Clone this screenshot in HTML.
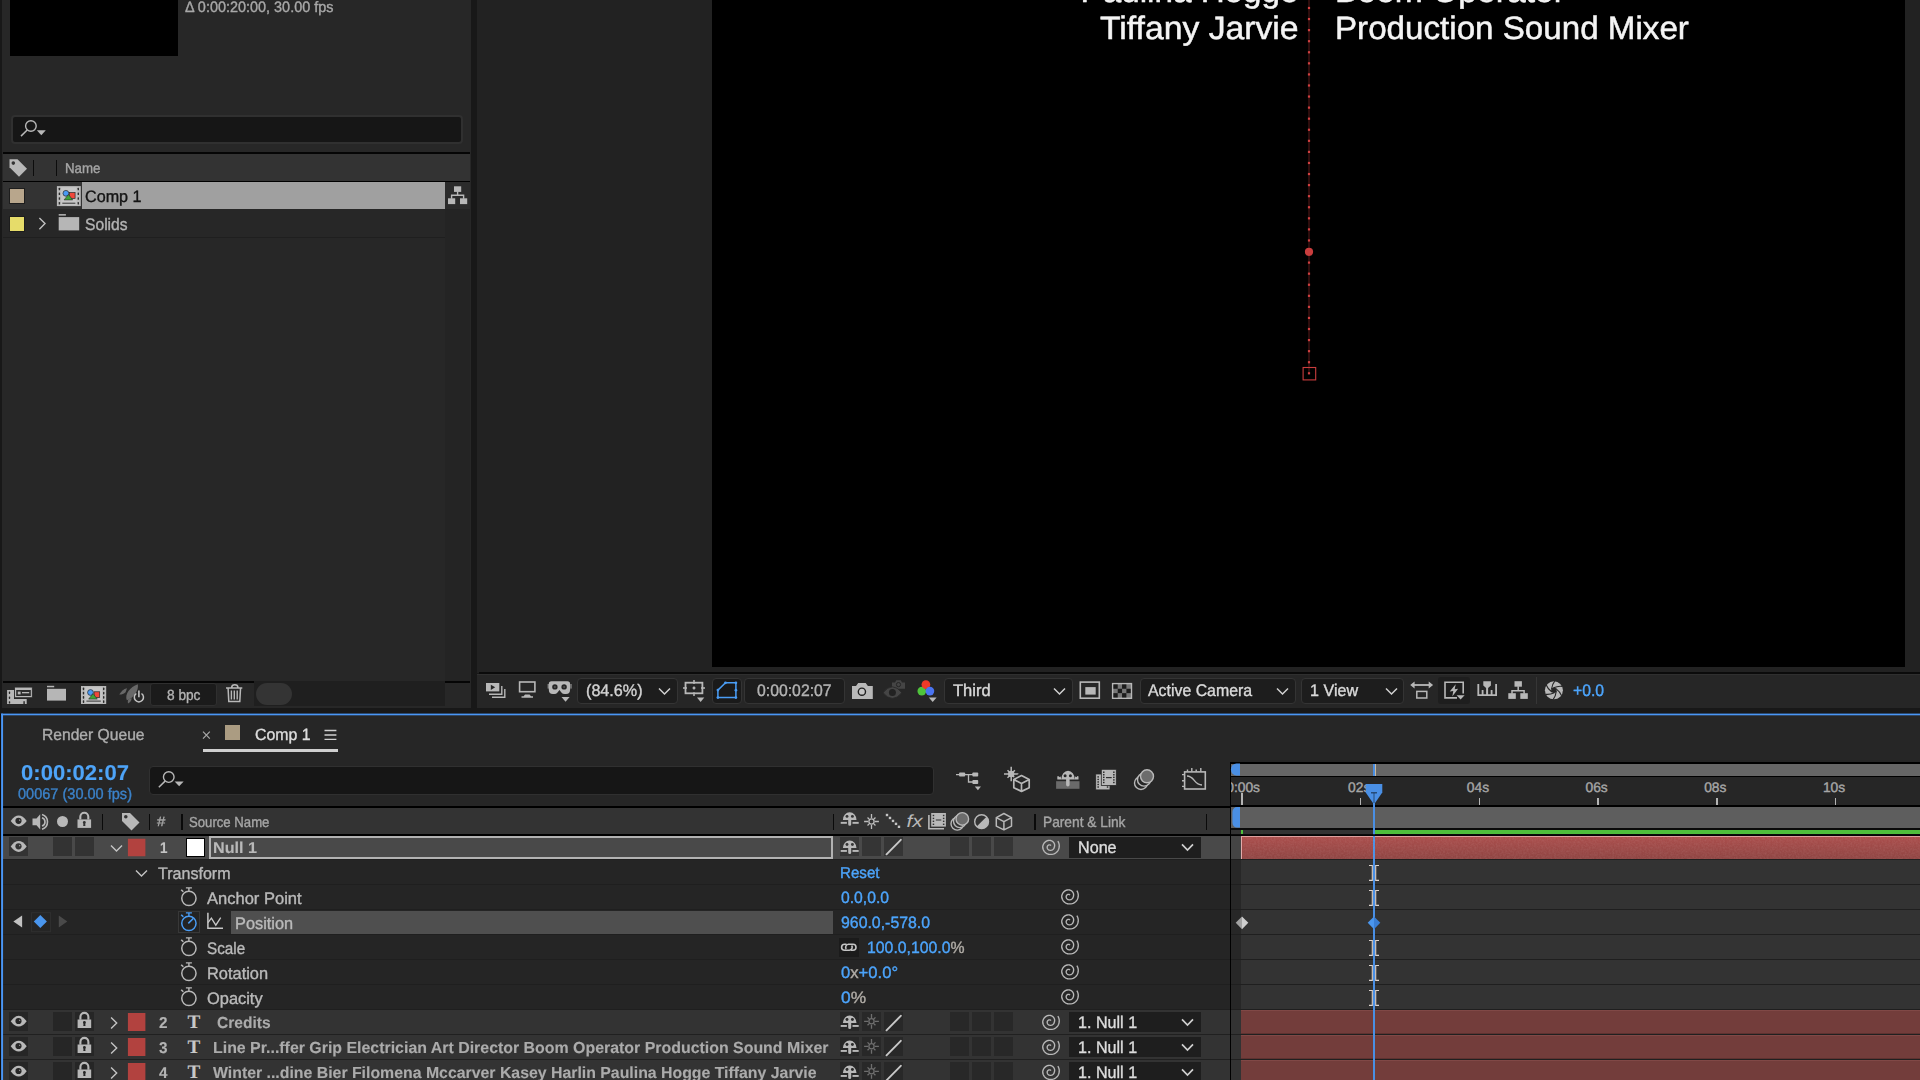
<!DOCTYPE html>
<html lang="en"><head><meta charset="utf-8"><title>After Effects - Comp 1</title>
<style>
html,body{margin:0;padding:0;background:#181818;text-rendering:geometricPrecision;}
body{width:1920px;height:1080px;overflow:hidden;position:relative;font-family:"Liberation Sans",sans-serif;}
#app div,#app span.t{position:absolute;}
#app{position:absolute;left:0;top:0;width:1920px;height:1080px;overflow:hidden;}
span.t{white-space:pre;-webkit-text-stroke:0.38px currentColor;}
span.t i{-webkit-text-stroke:0.38px currentColor;}
span.t i{font-style:normal;}
svg#ic{position:absolute;left:0;top:0;width:1920px;height:1080px;pointer-events:none;}
</style></head>
<body>
<div id="app">
<section class="project-panel">
<div style="left:2px;top:0px;width:469px;height:708px;background:#272727;"></div>
<div style="left:10px;top:0px;width:168px;height:55.5px;background:#000;"></div>
<span id="t1" class="t" style="top:0px;font-size:15.1px;line-height:15.1px;color:#a8a8a8;left:184.77px;transform:scaleX(0.9561);transform-origin:0 50%;">Δ 0:00:20:00, 30.00 fps</span>
<div style="left:10.5px;top:114.5px;width:452.5px;height:29.5px;background:#161616;border:2px solid #303030;border-radius:4px;box-sizing:border-box;"></div>
<div style="left:3px;top:152px;width:467px;height:2px;background:#000;opacity:.85;"></div>
<div style="left:3px;top:154px;width:467px;height:27px;background:#333333;"></div>
<div style="left:3px;top:181px;width:467px;height:1px;background:#000;"></div>
<div style="left:33px;top:160px;width:1px;height:16px;background:#0c0c0c;"></div>
<div style="left:56px;top:160px;width:1px;height:16px;background:#0c0c0c;"></div>
<span id="t2" class="t" style="top:162px;font-size:14.2px;line-height:14.2px;color:#a6a6a6;left:64.80px;transform:scaleX(0.9348);transform-origin:0 50%;">Name</span>
<div style="left:3px;top:182px;width:79px;height:27px;background:#333333;"></div>
<div style="left:82px;top:182px;width:363px;height:26.5px;background:#a0a0a0;"></div>
<div style="left:445px;top:182px;width:25px;height:27px;background:#2b2b2b;"></div>
<div style="left:445px;top:209px;width:25px;height:472px;background:#242424;"></div>
<div style="left:3px;top:237px;width:442px;height:1px;background:#1f1f1f;"></div>
<div style="left:10px;top:189px;width:14px;height:14px;background:#b8a68c;box-shadow:0 0 0 1px #1d1d1d;"></div>
<div style="left:10px;top:217px;width:14px;height:14px;background:#e6dc6a;box-shadow:0 0 0 1px #1d1d1d;"></div>
<span id="t3" class="t" style="top:189px;font-size:16.6px;line-height:16.6px;color:#141414;left:85.10px;transform:scaleX(0.9739);transform-origin:0 50%;">Comp 1</span>
<span id="t4" class="t" style="top:217px;font-size:16.7px;line-height:16.7px;color:#b4b4b4;left:84.70px;transform:scaleX(0.9373);transform-origin:0 50%;">Solids</span>
<div style="left:3px;top:681px;width:467px;height:2px;background:#050505;"></div>
<div style="left:254px;top:681px;width:191px;height:25px;background:#1f1f1f;"></div>
<div style="left:256px;top:683px;width:36px;height:22px;background:#343434;border-radius:11px;"></div>
<div style="left:150px;top:683px;width:67px;height:23px;background:#1b1b1b;border:1px solid #2f2f2f;border-radius:3px;box-sizing:border-box;"></div>
<span id="t5" class="t" style="top:689px;font-size:14.8px;line-height:14.8px;color:#b4b4b4;left:166.78px;transform:scaleX(0.9238);transform-origin:0 50%;">8 bpc</span>
</section>
<section class="composition-viewer">
<div style="left:477px;top:0px;width:1443px;height:673px;background:#222222;"></div>
<div style="left:712px;top:0px;width:1193px;height:666.5px;background:#000;"></div>
<div style="left:479px;top:672px;width:1441px;height:2px;background:#0b0b0b;"></div>
<div style="left:477px;top:674px;width:1443px;height:34px;background:#262626;"></div>
<div style="left:477px;top:674px;width:1443px;height:1px;background:#2f2f2f;"></div>
<span id="t6" class="t" style="top:-25px;font-size:32.4px;line-height:32.4px;color:#f4f4f4;right:621.14px;transform:scaleX(1.0254);transform-origin:100% 50%;-webkit-text-stroke:0.5px currentColor;">Paulina Hogge</span>
<span id="t7" class="t" style="top:-25px;font-size:32.4px;line-height:32.4px;color:#f4f4f4;left:1335.04px;transform:scaleX(1.0383);transform-origin:0 50%;-webkit-text-stroke:0.5px currentColor;">Boom Operator</span>
<span id="t8" class="t" style="top:12px;font-size:32.4px;line-height:32.4px;color:#f4f4f4;left:1099.84px;transform:scaleX(1.0408);transform-origin:0 50%;-webkit-text-stroke:0.5px currentColor;">Tiffany Jarvie</span>
<span id="t9" class="t" style="top:12px;font-size:32.4px;line-height:32.4px;color:#f4f4f4;left:1335.04px;transform:scaleX(1.0238);transform-origin:0 50%;-webkit-text-stroke:0.5px currentColor;">Production Sound Mixer</span>
<div style="left:577px;top:677.5px;width:100.5px;height:26px;background:#1d1d1d;border:1px solid #343434;border-radius:4px;box-sizing:border-box;"></div>
<div style="left:712px;top:677.5px;width:29.5px;height:26px;background:#1a1a1a;border:1px solid #343434;border-radius:4px;box-sizing:border-box;"></div>
<div style="left:744px;top:677.5px;width:100.5px;height:26px;background:#1d1d1d;border:1px solid #343434;border-radius:4px;box-sizing:border-box;"></div>
<div style="left:944px;top:677.5px;width:128.5px;height:26px;background:#1d1d1d;border:1px solid #343434;border-radius:4px;box-sizing:border-box;"></div>
<div style="left:1139.5px;top:677.5px;width:156px;height:26px;background:#1d1d1d;border:1px solid #343434;border-radius:4px;box-sizing:border-box;"></div>
<div style="left:1301px;top:677.5px;width:103px;height:26px;background:#1d1d1d;border:1px solid #343434;border-radius:4px;box-sizing:border-box;"></div>
<div style="left:1438px;top:677px;width:32px;height:27px;background:#1e1e1e;border-radius:3px;"></div>
<div style="left:1536px;top:677px;width:1px;height:27px;background:#363636;"></div>
<span id="t10" class="t" style="top:683px;font-size:16.7px;line-height:16.7px;color:#d2d2d2;left:585.70px;transform:scaleX(0.9686);transform-origin:0 50%;">(84.6%)</span>
<span id="t11" class="t" style="top:683px;font-size:16.7px;line-height:16.7px;color:#b2b2b2;left:756.70px;transform:scaleX(0.9458);transform-origin:0 50%;">0:00:02:07</span>
<span id="t12" class="t" style="top:683px;font-size:16.9px;line-height:16.9px;color:#dadada;left:952.69px;transform:scaleX(0.9775);transform-origin:0 50%;">Third</span>
<span id="t13" class="t" style="top:683px;font-size:16.9px;line-height:16.9px;color:#dadada;left:1148.19px;transform:scaleX(0.9400);transform-origin:0 50%;">Active Camera</span>
<span id="t14" class="t" style="top:683px;font-size:16.9px;line-height:16.9px;color:#dadada;left:1310.19px;transform:scaleX(0.9546);transform-origin:0 50%;">1 View</span>
<span id="t15" class="t" style="top:683px;font-size:16.7px;line-height:16.7px;color:#4ca4fb;left:1572.70px;transform:scaleX(0.9438);transform-origin:0 50%;">+0.0</span>
</section>
<section class="timeline-panel">
<div style="left:0px;top:714px;width:1920px;height:366px;background:#262626;"></div>
<div style="left:0px;top:714px;width:2px;height:366px;background:#100c0a;"></div>
<span id="t16" class="t" style="top:728px;font-size:16.0px;line-height:16.0px;color:#adadad;left:41.73px;transform:scaleX(0.9769);transform-origin:0 50%;">Render Queue</span>
<div style="left:224.5px;top:725px;width:15px;height:15px;background:#ab9c82;"></div>
<span id="t17" class="t" style="top:727px;font-size:16.3px;line-height:16.3px;color:#dcdcdc;left:255.12px;transform:scaleX(0.9746);transform-origin:0 50%;">Comp 1</span>
<div style="left:203px;top:749px;width:135px;height:3px;background:#cfcfcf;"></div>
<span id="t18" class="t" style="top:763px;font-size:21.5px;line-height:21.5px;color:#4ea4f8;font-weight:700;-webkit-text-stroke:0.12px currentColor;left:20.50px;transform:scaleX(1.0268);transform-origin:0 50%;">0:00:02:07</span>
<span id="t19" class="t" style="top:787px;font-size:15.4px;line-height:15.4px;color:#3b82c9;left:17.75px;transform:scaleX(0.9448);transform-origin:0 50%;">00067 (30.00 fps)</span>
<div style="left:149px;top:765.5px;width:785px;height:29px;background:#161616;border:1px solid #303030;border-radius:4px;box-sizing:border-box;"></div>
<div style="left:3px;top:806px;width:1226.5px;height:2px;background:#000;"></div>
<div style="left:3px;top:808px;width:1226.5px;height:26px;background:#333333;"></div>
<div style="left:3px;top:834px;width:1226.5px;height:2px;background:#000;"></div>
<div style="left:1241px;top:835px;width:679px;height:1px;background:#333;"></div>
<div style="left:101.5px;top:814px;width:1.5px;height:15.5px;background:#0a0a0a;"></div>
<div style="left:148.5px;top:814px;width:1.5px;height:15.5px;background:#0a0a0a;"></div>
<div style="left:181.0px;top:814px;width:1.5px;height:15.5px;background:#0a0a0a;"></div>
<div style="left:832.8px;top:814px;width:1.5px;height:15.5px;background:#0a0a0a;"></div>
<div style="left:1034.0px;top:814px;width:1.5px;height:15.5px;background:#0a0a0a;"></div>
<div style="left:1205.8px;top:814px;width:1.5px;height:15.5px;background:#0a0a0a;"></div>
<span id="t20" class="t" style="top:815px;font-size:13.4px;line-height:13.4px;color:#a6a6a6;left:156.84px;transform:scaleX(1.1171);transform-origin:0 50%;">#</span>
<span id="t21" class="t" style="top:816px;font-size:14.5px;line-height:14.5px;color:#a6a6a6;left:188.79px;transform:scaleX(0.9071);transform-origin:0 50%;">Source Name</span>
<span id="t22" class="t" style="top:816px;font-size:14.8px;line-height:14.8px;color:#a6a6a6;left:1042.78px;transform:scaleX(0.9280);transform-origin:0 50%;">Parent &amp; Link</span>
<div style="left:3px;top:836px;width:1226.5px;height:23px;background:#494949;"></div>
<div style="left:1231px;top:836px;width:10px;height:23px;background:#444444;"></div>
<div style="left:3px;top:859px;width:1917px;height:1px;background:#1e1e1e;"></div>
<div style="left:9px;top:837px;width:19px;height:19px;background:#333333;"></div>
<div style="left:53px;top:837px;width:19px;height:19px;background:#333333;"></div>
<div style="left:75px;top:837px;width:19px;height:19px;background:#333333;"></div>
<div style="left:840px;top:837px;width:19px;height:19px;background:#353535;"></div>
<div style="left:862px;top:837px;width:19px;height:19px;background:#353535;"></div>
<div style="left:884px;top:837px;width:19px;height:19px;background:#353535;"></div>
<div style="left:950px;top:837px;width:19px;height:19px;background:#353535;"></div>
<div style="left:972px;top:837px;width:19px;height:19px;background:#353535;"></div>
<div style="left:994px;top:837px;width:19px;height:19px;background:#353535;"></div>
<span id="t23" class="t" style="top:841px;font-size:15.4px;line-height:15.4px;color:#c4c4c4;font-weight:700;-webkit-text-stroke:0.12px currentColor;left:159.75px;transform:scaleX(0.8752);transform-origin:0 50%;">1</span>
<div style="left:185.5px;top:837.5px;width:19.5px;height:19px;background:#ffffff;border:1.3px solid #000;box-sizing:border-box;"></div>
<div style="left:209px;top:836.3px;width:624px;height:22.5px;background:#494949;border:2px solid #b2b2b2;box-sizing:border-box;"></div>
<span id="t24" class="t" style="top:841px;font-size:15.7px;line-height:15.7px;color:#b8b8b8;font-weight:700;-webkit-text-stroke:0.12px currentColor;left:213.24px;transform:scaleX(1.0304);transform-origin:0 50%;">Null 1</span>
<div style="left:1069px;top:837px;width:131.5px;height:20.5px;background:#1e1e1e;"></div>
<span id="t25" class="t" style="top:840px;font-size:16.7px;line-height:16.7px;color:#dcdcdc;left:1078.20px;transform:scaleX(0.9673);transform-origin:0 50%;">None</span>
<div style="left:3px;top:860px;width:1226.5px;height:24px;background:#252525;"></div>
<div style="left:1231px;top:860px;width:10px;height:24px;background:#272727;"></div>
<div style="left:1241px;top:860px;width:679px;height:24px;background:#333333;"></div>
<div style="left:3px;top:884px;width:1917px;height:1px;background:#1f1f1f;"></div>
<div style="left:3px;top:885px;width:1226.5px;height:24px;background:#252525;"></div>
<div style="left:1231px;top:885px;width:10px;height:24px;background:#272727;"></div>
<div style="left:1241px;top:885px;width:679px;height:24px;background:#333333;"></div>
<div style="left:3px;top:909px;width:1917px;height:1px;background:#1f1f1f;"></div>
<div style="left:3px;top:910px;width:1226.5px;height:24px;background:#252525;"></div>
<div style="left:1231px;top:910px;width:10px;height:24px;background:#272727;"></div>
<div style="left:1241px;top:910px;width:679px;height:24px;background:#333333;"></div>
<div style="left:3px;top:934px;width:1917px;height:1px;background:#1f1f1f;"></div>
<div style="left:3px;top:935px;width:1226.5px;height:24px;background:#252525;"></div>
<div style="left:1231px;top:935px;width:10px;height:24px;background:#272727;"></div>
<div style="left:1241px;top:935px;width:679px;height:24px;background:#333333;"></div>
<div style="left:3px;top:959px;width:1917px;height:1px;background:#1f1f1f;"></div>
<div style="left:3px;top:960px;width:1226.5px;height:24px;background:#252525;"></div>
<div style="left:1231px;top:960px;width:10px;height:24px;background:#272727;"></div>
<div style="left:1241px;top:960px;width:679px;height:24px;background:#333333;"></div>
<div style="left:3px;top:984px;width:1917px;height:1px;background:#1f1f1f;"></div>
<div style="left:3px;top:985px;width:1226.5px;height:24px;background:#252525;"></div>
<div style="left:1231px;top:985px;width:10px;height:24px;background:#272727;"></div>
<div style="left:1241px;top:985px;width:679px;height:24px;background:#333333;"></div>
<div style="left:3px;top:1009px;width:1917px;height:1px;background:#1f1f1f;"></div>
<span id="t26" class="t" style="top:866px;font-size:16.6px;line-height:16.6px;color:#b8b8b8;left:158.20px;transform:scaleX(0.9679);transform-origin:0 50%;">Transform</span>
<span id="t27" class="t" style="top:866px;font-size:15.8px;line-height:15.8px;color:#4ca4fb;left:840.24px;transform:scaleX(0.9575);transform-origin:0 50%;">Reset</span>
<div style="left:230.6px;top:910.6px;width:602.5px;height:23.2px;background:#4f4f4f;"></div>
<div style="left:178px;top:911px;width:22px;height:22px;background:#232323;border:1px solid #383838;box-sizing:border-box;"></div>
<span id="t28" class="t" style="top:891px;font-size:16.7px;line-height:16.7px;color:#bababa;left:206.70px;transform:scaleX(0.9901);transform-origin:0 50%;">Anchor Point</span>
<span id="t29" class="t" style="top:916px;font-size:16.7px;line-height:16.7px;color:#bababa;left:235.20px;transform:scaleX(0.9786);transform-origin:0 50%;">Position</span>
<span id="t30" class="t" style="top:941px;font-size:16.7px;line-height:16.7px;color:#bababa;left:206.70px;transform:scaleX(0.9126);transform-origin:0 50%;">Scale</span>
<span id="t31" class="t" style="top:966px;font-size:16.7px;line-height:16.7px;color:#bababa;left:206.70px;transform:scaleX(0.9831);transform-origin:0 50%;">Rotation</span>
<span id="t32" class="t" style="top:991px;font-size:16.7px;line-height:16.7px;color:#bababa;left:206.70px;transform:scaleX(0.9828);transform-origin:0 50%;">Opacity</span>
<span id="t33" class="t" style="top:890px;font-size:16.4px;line-height:16.4px;color:#4ca4fb;left:841.21px;transform:scaleX(0.9592);transform-origin:0 50%;">0.0,0.0</span>
<span id="t34" class="t" style="top:915px;font-size:16.4px;line-height:16.4px;color:#4ca4fb;left:841.21px;transform:scaleX(0.9677);transform-origin:0 50%;">960.0,-578.0</span>
<div style="left:838.5px;top:937.5px;width:20.5px;height:19.5px;background:#1b1b1b;"></div>
<span id="t35" class="t" style="top:940px;font-size:16.4px;line-height:16.4px;color:#4ca4fb;left:866.71px;transform:scaleX(0.9645);transform-origin:0 50%;">100.0,100.0<i style="color:#b0aca6">%</i></span>
<span id="t36" class="t" style="top:965px;font-size:16.4px;line-height:16.4px;color:#4ca4fb;left:841.21px;transform:scaleX(1.0147);transform-origin:0 50%;">0<i style="color:#b0aca6">x</i>+0.0°</span>
<span id="t37" class="t" style="top:990px;font-size:16.4px;line-height:16.4px;color:#4ca4fb;left:841.21px;transform:scaleX(1.0580);transform-origin:0 50%;">0<i style="color:#b0aca6">%</i></span>
<div style="left:3px;top:1010px;width:1226.5px;height:24px;background:#333333;"></div>
<div style="left:1231px;top:1010px;width:10px;height:24px;background:#333333;"></div>
<div style="left:1241px;top:1010px;width:679px;height:24px;background:#733d3b;border-top:1px solid #804846;border-bottom:1px solid #5e3230;box-sizing:border-box;"></div>
<div style="left:3px;top:1034px;width:1917px;height:1px;background:#202020;"></div>
<div style="left:9px;top:1012px;width:19px;height:19px;background:#262626;"></div>
<div style="left:53px;top:1012px;width:19px;height:19px;background:#262626;"></div>
<div style="left:75px;top:1012px;width:19px;height:19px;background:#262626;"></div>
<div style="left:840px;top:1012px;width:19px;height:19px;background:#282828;"></div>
<div style="left:862px;top:1012px;width:19px;height:19px;background:#282828;"></div>
<div style="left:884px;top:1012px;width:19px;height:19px;background:#282828;"></div>
<div style="left:950px;top:1012px;width:19px;height:19px;background:#282828;"></div>
<div style="left:972px;top:1012px;width:19px;height:19px;background:#282828;"></div>
<div style="left:994px;top:1012px;width:19px;height:19px;background:#282828;"></div>
<span id="t38" class="t" style="top:1016px;font-size:15.7px;line-height:15.7px;color:#b4b4b4;font-weight:700;-webkit-text-stroke:0.12px currentColor;left:158.74px;transform:scaleX(0.9753);transform-origin:0 50%;">2</span>
<span id="t39" class="t" style="top:1013px;font-size:19.2px;line-height:19.2px;color:#c8c8c8;font-weight:700;-webkit-text-stroke:0.12px currentColor;font-family:'Liberation Serif', serif;left:187.59px;">T</span>
<span id="t40" class="t" style="top:1016px;font-size:16.0px;line-height:16.0px;color:#ababab;font-weight:700;-webkit-text-stroke:0.12px currentColor;left:216.73px;transform:scaleX(0.9713);transform-origin:0 50%;">Credits</span>
<div style="left:1069px;top:1012px;width:131.5px;height:20px;background:#1e1e1e;"></div>
<span id="t41" class="t" style="top:1015px;font-size:16.9px;line-height:16.9px;color:#dcdcdc;left:1078.19px;transform:scaleX(0.9540);transform-origin:0 50%;">1. Null 1</span>
<div style="left:3px;top:1035px;width:1226.5px;height:24px;background:#333333;"></div>
<div style="left:1231px;top:1035px;width:10px;height:24px;background:#333333;"></div>
<div style="left:1241px;top:1035px;width:679px;height:24px;background:#733d3b;border-top:1px solid #804846;border-bottom:1px solid #5e3230;box-sizing:border-box;"></div>
<div style="left:3px;top:1059px;width:1917px;height:1px;background:#202020;"></div>
<div style="left:9px;top:1037px;width:19px;height:19px;background:#262626;"></div>
<div style="left:53px;top:1037px;width:19px;height:19px;background:#262626;"></div>
<div style="left:75px;top:1037px;width:19px;height:19px;background:#262626;"></div>
<div style="left:840px;top:1037px;width:19px;height:19px;background:#282828;"></div>
<div style="left:862px;top:1037px;width:19px;height:19px;background:#282828;"></div>
<div style="left:884px;top:1037px;width:19px;height:19px;background:#282828;"></div>
<div style="left:950px;top:1037px;width:19px;height:19px;background:#282828;"></div>
<div style="left:972px;top:1037px;width:19px;height:19px;background:#282828;"></div>
<div style="left:994px;top:1037px;width:19px;height:19px;background:#282828;"></div>
<span id="t42" class="t" style="top:1041px;font-size:15.7px;line-height:15.7px;color:#b4b4b4;font-weight:700;-webkit-text-stroke:0.12px currentColor;left:158.74px;transform:scaleX(0.9753);transform-origin:0 50%;">3</span>
<span id="t43" class="t" style="top:1038px;font-size:19.2px;line-height:19.2px;color:#c8c8c8;font-weight:700;-webkit-text-stroke:0.12px currentColor;font-family:'Liberation Serif', serif;left:187.59px;">T</span>
<span id="t44" class="t" style="top:1041px;font-size:16.0px;line-height:16.0px;color:#ababab;font-weight:700;-webkit-text-stroke:0.12px currentColor;left:212.73px;transform:scaleX(0.9943);transform-origin:0 50%;">Line Pr...ffer Grip Electrician Art Director Boom Operator Production Sound Mixer</span>
<div style="left:1069px;top:1037px;width:131.5px;height:20px;background:#1e1e1e;"></div>
<span id="t45" class="t" style="top:1040px;font-size:16.9px;line-height:16.9px;color:#dcdcdc;left:1078.19px;transform:scaleX(0.9540);transform-origin:0 50%;">1. Null 1</span>
<div style="left:3px;top:1060px;width:1226.5px;height:24px;background:#333333;"></div>
<div style="left:1231px;top:1060px;width:10px;height:24px;background:#333333;"></div>
<div style="left:1241px;top:1060px;width:679px;height:24px;background:#733d3b;border-top:1px solid #804846;border-bottom:1px solid #5e3230;box-sizing:border-box;"></div>
<div style="left:3px;top:1084px;width:1917px;height:1px;background:#202020;"></div>
<div style="left:9px;top:1062px;width:19px;height:19px;background:#262626;"></div>
<div style="left:53px;top:1062px;width:19px;height:19px;background:#262626;"></div>
<div style="left:75px;top:1062px;width:19px;height:19px;background:#262626;"></div>
<div style="left:840px;top:1062px;width:19px;height:19px;background:#282828;"></div>
<div style="left:862px;top:1062px;width:19px;height:19px;background:#282828;"></div>
<div style="left:884px;top:1062px;width:19px;height:19px;background:#282828;"></div>
<div style="left:950px;top:1062px;width:19px;height:19px;background:#282828;"></div>
<div style="left:972px;top:1062px;width:19px;height:19px;background:#282828;"></div>
<div style="left:994px;top:1062px;width:19px;height:19px;background:#282828;"></div>
<span id="t46" class="t" style="top:1066px;font-size:15.7px;line-height:15.7px;color:#b4b4b4;font-weight:700;-webkit-text-stroke:0.12px currentColor;left:158.74px;transform:scaleX(0.9753);transform-origin:0 50%;">4</span>
<span id="t47" class="t" style="top:1063px;font-size:19.2px;line-height:19.2px;color:#c8c8c8;font-weight:700;-webkit-text-stroke:0.12px currentColor;font-family:'Liberation Serif', serif;left:187.59px;">T</span>
<span id="t48" class="t" style="top:1066px;font-size:16.0px;line-height:16.0px;color:#ababab;font-weight:700;-webkit-text-stroke:0.12px currentColor;left:212.73px;transform:scaleX(0.9902);transform-origin:0 50%;">Winter ...dine Bier Filomena Mccarver Kasey Harlin Paulina Hogge Tiffany Jarvie</span>
<div style="left:1069px;top:1062px;width:131.5px;height:20px;background:#1e1e1e;"></div>
<span id="t49" class="t" style="top:1065px;font-size:16.9px;line-height:16.9px;color:#dcdcdc;left:1078.19px;transform:scaleX(0.9540);transform-origin:0 50%;">1. Null 1</span>
<div style="left:1229.5px;top:761.5px;width:690.5px;height:2px;background:#000;"></div>
<div style="left:1231px;top:763.5px;width:689px;height:12px;background:#666666;"></div>
<div style="left:1231px;top:775.5px;width:689px;height:1.5px;background:#000;"></div>
<div style="left:1231px;top:805px;width:689px;height:1.5px;background:#000;"></div>
<div style="left:1231px;top:806.5px;width:689px;height:21.5px;background:#5e5e5e;"></div>
<div style="left:1231px;top:828px;width:689px;height:1.5px;background:#0a0a0a;"></div>
<div style="left:1231px;top:829.5px;width:689px;height:4.5px;background:#333333;"></div>
<div style="left:1241px;top:829.5px;width:2px;height:4.5px;background:#4fbe3c;"></div>
<div style="left:1374px;top:829.5px;width:546px;height:4.5px;background:#4fbe3c;"></div>
<div style="left:1241px;top:836px;width:679px;height:23px;background:linear-gradient(#aa4e4c,#8f4543);border-top:1px solid #dda09e;border-left:1.5px solid #e2acaa;box-sizing:border-box;"></div>
<div style="left:1231px;top:777px;width:689px;height:28px;overflow:hidden">
<span class="t" style="left:-4.8px;top:4px;font-size:13.8px;line-height:14px;color:#a6a6a6;">0:00s</span>
<div style="left:10.2px;top:16px;width:1.6px;height:12px;background:#b4b4b4"></div>
<span class="t" style="left:117.1px;top:4px;font-size:13.8px;line-height:14px;color:#a6a6a6;">02s</span>
<div style="left:128.9px;top:20.5px;width:1.6px;height:7.5px;background:#b4b4b4"></div>
<span class="t" style="left:235.8px;top:4px;font-size:13.8px;line-height:14px;color:#a6a6a6;">04s</span>
<div style="left:247.6px;top:20.5px;width:1.6px;height:7.5px;background:#b4b4b4"></div>
<span class="t" style="left:354.5px;top:4px;font-size:13.8px;line-height:14px;color:#a6a6a6;">06s</span>
<div style="left:366.3px;top:20.5px;width:1.6px;height:7.5px;background:#b4b4b4"></div>
<span class="t" style="left:473.2px;top:4px;font-size:13.8px;line-height:14px;color:#a6a6a6;">08s</span>
<div style="left:485.0px;top:20.5px;width:1.6px;height:7.5px;background:#b4b4b4"></div>
<span class="t" style="left:591.9px;top:4px;font-size:13.8px;line-height:14px;color:#a6a6a6;">10s</span>
<div style="left:603.7px;top:20.5px;width:1.6px;height:7.5px;background:#b4b4b4"></div>
</div>
<div style="left:1229.5px;top:762px;width:1.6px;height:318px;background:#000;"></div>
<div style="left:1373px;top:763.5px;width:2px;height:12px;background:#4a8fe4;"></div>
<div style="left:1375px;top:763.5px;width:0.7px;height:12px;background:#c8b9a0;"></div>
<div style="left:1373px;top:800px;width:2px;height:280px;background:#4a8fe4;"></div>
</section>
<svg id="ic" viewBox="0 0 1920 1080" width="1920" height="1080">
<rect x="1229" y="834.3" width="691" height="1.6" fill="#000"/>
<rect x="127.9" y="838.75" width="17.5" height="17.5" fill="#b2423f"/>
<rect x="127.9" y="1013" width="17.5" height="18" fill="#b2423f"/>
<rect x="127.9" y="1038" width="17.5" height="18" fill="#b2423f"/>
<rect x="127.9" y="1063" width="17.5" height="18" fill="#b2423f"/>
<defs><filter id="nz" x="0" y="0" width="100%" height="100%"><feTurbulence type="fractalNoise" baseFrequency="0.55" numOctaves="2" seed="3" result="n"/><feColorMatrix type="matrix" values="0 0 0 0 1  0 0 0 0 0.85  0 0 0 0 0.85  0.9 0 0 0 -0.28"/></filter></defs>
<rect x="1243" y="837" width="677" height="22" filter="url(#nz)" opacity="0.16"/>
<path d="M10.7 821 Q14.7 815.6 18.7 815.6 Q22.7 815.6 26.7 821 Q22.7 826.4 18.7 826.4 Q14.7 826.4 10.7 821Z" fill="#b8b8b8"/>
<circle cx="18.5" cy="820.8" r="3.1" fill="#2a2a2a"/>
<path d="M19 819.3 L20.7 820.2 L19 820.9Z" fill="#b8b8b8" opacity=".8"/>
<path d="M77.5 819.4 H91.1 V827.9 H77.5Z" fill="#b8b8b8"/>
<path d="M80.3 819.6 V816.8 A4 4 0 0 1 88.3 816.8 V819.6" fill="none" stroke="#b8b8b8" stroke-width="2.1"/>
<circle cx="84.3" cy="822.4" r="1.4" fill="#333"/>
<path d="M83.5 822.6 L85.1 822.6 L85.4 826 L83.2 826Z" fill="#333"/>
<path d="M32.5 818.5 H36.5 L40.2 814.3 V829.4 L36.5 825.3 H32.5Z" fill="#b8b8b8"/>
<path d="M42 817.8 A4.3 4.3 0 0 1 42 826 M42 814.4 A7.8 7.8 0 0 1 42 829.3" fill="none" stroke="#b8b8b8" stroke-width="1.6"/>
<circle cx="62.5" cy="821.5" r="5.5" fill="#b8b8b8"/>
<path d="M122 813 H130 L139.5 822.5 L131.5 830.5 L122 821Z" fill="#b8b8b8"/>
<circle cx="125.8" cy="816.8" r="1.8" fill="#333"/>
<path d="M9.5 159.3 H17.5 L27 168.8 L19 176.8 L9.5 167.3Z" fill="#b8b8b8"/>
<circle cx="13.3" cy="163.1" r="1.8" fill="#333"/>
<path d="M10.7 846.5 Q14.7 841.1 18.7 841.1 Q22.7 841.1 26.7 846.5 Q22.7 851.9 18.7 851.9 Q14.7 851.9 10.7 846.5Z" fill="#b8b8b8"/>
<circle cx="18.5" cy="846.3" r="3.1" fill="#333"/>
<path d="M19 844.8 L20.7 845.7 L19 846.4Z" fill="#b8b8b8" opacity=".8"/>
<path d="M111 845.4 L116.5 851 L122 845.4" fill="none" stroke="#c4c4c4" stroke-width="1.4" stroke-linecap="butt" stroke-linejoin="miter"/>
<path d="M136 870.4 L141.5 876 L147 870.4" fill="none" stroke="#c4c4c4" stroke-width="1.4" stroke-linecap="butt" stroke-linejoin="miter"/>
<path d="M842.9 848 A6.8 7.6 0 0 1 856.5 848 L851.2 848 L851.2 852.4 A1.5 1.5 0 0 1 848.2 852.4 L848.2 848Z" fill="#b8b8b8"/>
<rect x="840.7" y="850" width="6.2" height="1.9" fill="#b8b8b8"/>
<rect x="852.5" y="850" width="6.2" height="1.9" fill="#b8b8b8"/>
<circle cx="847" cy="844.5" r="1.45" fill="#353535"/><circle cx="852.4" cy="844.5" r="1.45" fill="#353535"/>
<path d="M886.5 854.3 L900.8 839.8" stroke="#c8c8c8" stroke-width="1.9" fill="none" stroke-linecap="round"/>
<path d="M1057.86 841.13 L1058.45 842.23 L1058.89 843.38 L1059.16 844.57 L1059.27 845.77 L1059.21 846.96 L1059 848.12 L1058.65 849.22 L1058.15 850.26 L1057.52 851.21 L1056.78 852.05 L1055.94 852.78 L1055.03 853.39 L1054.05 853.87 L1053.02 854.21 L1051.97 854.4 L1050.91 854.45 L1049.87 854.41 L1048.83 854.27 L1047.82 853.99 L1046.86 853.57 L1045.95 853.03 L1045.13 852.37 L1044.42 851.59 L1043.82 850.72 L1043.34 849.78 L1043 848.79 L1042.79 847.75 L1042.74 846.7 L1042.93 845.67 L1043.25 844.7 L1043.7 843.79 L1044.27 842.96 L1044.93 842.23 L1045.67 841.61 L1046.48 841.11 L1047.33 840.73 L1048.22 840.47 L1049.11 840.35 L1050 840.35 L1050.87 840.52 L1051.66 840.85 L1052.38 841.28 L1053.01 841.79 L1053.54 842.37 L1053.96 842.99 L1054.29 843.64 L1054.51 844.31 L1054.62 844.97 L1054.64 845.62 L1054.56 846.25 L1054.41 846.83 L1054.29 847.37 L1054.11 847.89 L1053.86 848.37 L1053.56 848.81 L1053.2 849.19 L1052.8 849.52 L1052.39 849.81 L1051.94 850.04 L1051.46 850.21 L1050.98 850.31 L1050.49 850.34 L1050 850.31 L1049.53 850.21 L1049.07 850.05 L1048.65 849.83 L1048.27 849.56 L1047.93 849.25 L1047.65 848.88 L1047.45 848.48 L1047.3 848.06 L1047.21 847.63 L1047.18 847.21 L1047.21 846.8 L1047.33 846.41 L1047.5 846.05 L1047.71 845.73 L1047.95 845.46 L1048.23 845.23 L1048.52 845.05 L1048.82 844.92 L1049.13 844.85 L1049.43 844.82 L1049.72 844.84 L1049.99 844.89 L1050.24 844.99 L1050.46 845.13 L1050.64 845.29 L1050.79 845.47 L1050.9 845.66" fill="none" stroke="#b8b8b8" stroke-width="1.35" stroke-linecap="butt" stroke-linejoin="round"/>
<path d="M1182 844.4 L1187.5 850 L1193 844.4" fill="none" stroke="#d0d0d0" stroke-width="1.7" stroke-linecap="butt" stroke-linejoin="miter"/>
<circle cx="188.9" cy="898.35" r="7.15" fill="none" stroke="#b8b8b8" stroke-width="1.5"/>
<path d="M188.9 890.95 V887.75 M185.9 887.85 H191.9" stroke="#b8b8b8" stroke-width="1.4" fill="none"/>
<path d="M181.2 889.75 L183.3 891.75" stroke="#b8b8b8" stroke-width="1.6" fill="none"/>
<path d="M1076.86 890.63 L1077.45 891.73 L1077.89 892.88 L1078.16 894.07 L1078.27 895.27 L1078.21 896.46 L1078 897.62 L1077.65 898.72 L1077.15 899.76 L1076.52 900.71 L1075.78 901.55 L1074.94 902.28 L1074.03 902.89 L1073.05 903.37 L1072.02 903.71 L1070.97 903.9 L1069.91 903.95 L1068.87 903.91 L1067.83 903.77 L1066.82 903.49 L1065.86 903.07 L1064.95 902.53 L1064.13 901.87 L1063.42 901.09 L1062.82 900.22 L1062.34 899.28 L1062 898.29 L1061.79 897.25 L1061.74 896.2 L1061.93 895.17 L1062.25 894.2 L1062.7 893.29 L1063.27 892.46 L1063.93 891.73 L1064.67 891.11 L1065.48 890.61 L1066.33 890.23 L1067.22 889.97 L1068.11 889.85 L1069 889.85 L1069.87 890.02 L1070.66 890.35 L1071.38 890.78 L1072.01 891.29 L1072.54 891.87 L1072.96 892.49 L1073.29 893.14 L1073.51 893.81 L1073.62 894.47 L1073.64 895.12 L1073.56 895.75 L1073.41 896.33 L1073.29 896.87 L1073.11 897.39 L1072.86 897.87 L1072.56 898.31 L1072.2 898.69 L1071.8 899.02 L1071.39 899.31 L1070.94 899.54 L1070.46 899.71 L1069.98 899.81 L1069.49 899.84 L1069 899.81 L1068.53 899.71 L1068.07 899.55 L1067.65 899.33 L1067.27 899.06 L1066.93 898.75 L1066.65 898.38 L1066.45 897.98 L1066.3 897.56 L1066.21 897.13 L1066.18 896.71 L1066.21 896.3 L1066.33 895.91 L1066.5 895.55 L1066.71 895.23 L1066.95 894.96 L1067.23 894.73 L1067.52 894.55 L1067.82 894.42 L1068.13 894.35 L1068.43 894.32 L1068.72 894.34 L1068.99 894.39 L1069.24 894.49 L1069.46 894.63 L1069.64 894.79 L1069.79 894.97 L1069.9 895.16" fill="none" stroke="#b8b8b8" stroke-width="1.35" stroke-linecap="butt" stroke-linejoin="round"/>
<path d="M1369 890.5 H1372.3 V905.4 H1369 M1379 890.5 H1375.7 V905.4 H1379" stroke="#ddd4ce" stroke-width="1.1" fill="none"/>
<circle cx="188.9" cy="923.35" r="7.15" fill="none" stroke="#4a9df5" stroke-width="1.5"/>
<path d="M188.9 915.95 V912.75 M185.9 912.85 H191.9" stroke="#4a9df5" stroke-width="1.4" fill="none"/>
<path d="M181.2 914.75 L183.3 916.75" stroke="#4a9df5" stroke-width="1.6" fill="none"/>
<path d="M188.3 923.35 L193.5 918.25" stroke="#4a9df5" stroke-width="1.5" fill="none"/>
<path d="M1076.86 915.63 L1077.45 916.73 L1077.89 917.88 L1078.16 919.07 L1078.27 920.27 L1078.21 921.46 L1078 922.62 L1077.65 923.72 L1077.15 924.76 L1076.52 925.71 L1075.78 926.55 L1074.94 927.28 L1074.03 927.89 L1073.05 928.37 L1072.02 928.71 L1070.97 928.9 L1069.91 928.95 L1068.87 928.91 L1067.83 928.77 L1066.82 928.49 L1065.86 928.07 L1064.95 927.53 L1064.13 926.87 L1063.42 926.09 L1062.82 925.22 L1062.34 924.28 L1062 923.29 L1061.79 922.25 L1061.74 921.2 L1061.93 920.17 L1062.25 919.2 L1062.7 918.29 L1063.27 917.46 L1063.93 916.73 L1064.67 916.11 L1065.48 915.61 L1066.33 915.23 L1067.22 914.97 L1068.11 914.85 L1069 914.85 L1069.87 915.02 L1070.66 915.35 L1071.38 915.78 L1072.01 916.29 L1072.54 916.87 L1072.96 917.49 L1073.29 918.14 L1073.51 918.81 L1073.62 919.47 L1073.64 920.12 L1073.56 920.75 L1073.41 921.33 L1073.29 921.87 L1073.11 922.39 L1072.86 922.87 L1072.56 923.31 L1072.2 923.69 L1071.8 924.02 L1071.39 924.31 L1070.94 924.54 L1070.46 924.71 L1069.98 924.81 L1069.49 924.84 L1069 924.81 L1068.53 924.71 L1068.07 924.55 L1067.65 924.33 L1067.27 924.06 L1066.93 923.75 L1066.65 923.38 L1066.45 922.98 L1066.3 922.56 L1066.21 922.13 L1066.18 921.71 L1066.21 921.3 L1066.33 920.91 L1066.5 920.55 L1066.71 920.23 L1066.95 919.96 L1067.23 919.73 L1067.52 919.55 L1067.82 919.42 L1068.13 919.35 L1068.43 919.32 L1068.72 919.34 L1068.99 919.39 L1069.24 919.49 L1069.46 919.63 L1069.64 919.79 L1069.79 919.97 L1069.9 920.16" fill="none" stroke="#b8b8b8" stroke-width="1.35" stroke-linecap="butt" stroke-linejoin="round"/>
<circle cx="188.9" cy="948.35" r="7.15" fill="none" stroke="#b8b8b8" stroke-width="1.5"/>
<path d="M188.9 940.95 V937.75 M185.9 937.85 H191.9" stroke="#b8b8b8" stroke-width="1.4" fill="none"/>
<path d="M181.2 939.75 L183.3 941.75" stroke="#b8b8b8" stroke-width="1.6" fill="none"/>
<path d="M1076.86 940.63 L1077.45 941.73 L1077.89 942.88 L1078.16 944.07 L1078.27 945.27 L1078.21 946.46 L1078 947.62 L1077.65 948.72 L1077.15 949.76 L1076.52 950.71 L1075.78 951.55 L1074.94 952.28 L1074.03 952.89 L1073.05 953.37 L1072.02 953.71 L1070.97 953.9 L1069.91 953.95 L1068.87 953.91 L1067.83 953.77 L1066.82 953.49 L1065.86 953.07 L1064.95 952.53 L1064.13 951.87 L1063.42 951.09 L1062.82 950.22 L1062.34 949.28 L1062 948.29 L1061.79 947.25 L1061.74 946.2 L1061.93 945.17 L1062.25 944.2 L1062.7 943.29 L1063.27 942.46 L1063.93 941.73 L1064.67 941.11 L1065.48 940.61 L1066.33 940.23 L1067.22 939.97 L1068.11 939.85 L1069 939.85 L1069.87 940.02 L1070.66 940.35 L1071.38 940.78 L1072.01 941.29 L1072.54 941.87 L1072.96 942.49 L1073.29 943.14 L1073.51 943.81 L1073.62 944.47 L1073.64 945.12 L1073.56 945.75 L1073.41 946.33 L1073.29 946.87 L1073.11 947.39 L1072.86 947.87 L1072.56 948.31 L1072.2 948.69 L1071.8 949.02 L1071.39 949.31 L1070.94 949.54 L1070.46 949.71 L1069.98 949.81 L1069.49 949.84 L1069 949.81 L1068.53 949.71 L1068.07 949.55 L1067.65 949.33 L1067.27 949.06 L1066.93 948.75 L1066.65 948.38 L1066.45 947.98 L1066.3 947.56 L1066.21 947.13 L1066.18 946.71 L1066.21 946.3 L1066.33 945.91 L1066.5 945.55 L1066.71 945.23 L1066.95 944.96 L1067.23 944.73 L1067.52 944.55 L1067.82 944.42 L1068.13 944.35 L1068.43 944.32 L1068.72 944.34 L1068.99 944.39 L1069.24 944.49 L1069.46 944.63 L1069.64 944.79 L1069.79 944.97 L1069.9 945.16" fill="none" stroke="#b8b8b8" stroke-width="1.35" stroke-linecap="butt" stroke-linejoin="round"/>
<path d="M1369 940.5 H1372.3 V955.4 H1369 M1379 940.5 H1375.7 V955.4 H1379" stroke="#ddd4ce" stroke-width="1.1" fill="none"/>
<circle cx="188.9" cy="973.35" r="7.15" fill="none" stroke="#b8b8b8" stroke-width="1.5"/>
<path d="M188.9 965.95 V962.75 M185.9 962.85 H191.9" stroke="#b8b8b8" stroke-width="1.4" fill="none"/>
<path d="M181.2 964.75 L183.3 966.75" stroke="#b8b8b8" stroke-width="1.6" fill="none"/>
<path d="M1076.86 965.63 L1077.45 966.73 L1077.89 967.88 L1078.16 969.07 L1078.27 970.27 L1078.21 971.46 L1078 972.62 L1077.65 973.72 L1077.15 974.76 L1076.52 975.71 L1075.78 976.55 L1074.94 977.28 L1074.03 977.89 L1073.05 978.37 L1072.02 978.71 L1070.97 978.9 L1069.91 978.95 L1068.87 978.91 L1067.83 978.77 L1066.82 978.49 L1065.86 978.07 L1064.95 977.53 L1064.13 976.87 L1063.42 976.09 L1062.82 975.22 L1062.34 974.28 L1062 973.29 L1061.79 972.25 L1061.74 971.2 L1061.93 970.17 L1062.25 969.2 L1062.7 968.29 L1063.27 967.46 L1063.93 966.73 L1064.67 966.11 L1065.48 965.61 L1066.33 965.23 L1067.22 964.97 L1068.11 964.85 L1069 964.85 L1069.87 965.02 L1070.66 965.35 L1071.38 965.78 L1072.01 966.29 L1072.54 966.87 L1072.96 967.49 L1073.29 968.14 L1073.51 968.81 L1073.62 969.47 L1073.64 970.12 L1073.56 970.75 L1073.41 971.33 L1073.29 971.87 L1073.11 972.39 L1072.86 972.87 L1072.56 973.31 L1072.2 973.69 L1071.8 974.02 L1071.39 974.31 L1070.94 974.54 L1070.46 974.71 L1069.98 974.81 L1069.49 974.84 L1069 974.81 L1068.53 974.71 L1068.07 974.55 L1067.65 974.33 L1067.27 974.06 L1066.93 973.75 L1066.65 973.38 L1066.45 972.98 L1066.3 972.56 L1066.21 972.13 L1066.18 971.71 L1066.21 971.3 L1066.33 970.91 L1066.5 970.55 L1066.71 970.23 L1066.95 969.96 L1067.23 969.73 L1067.52 969.55 L1067.82 969.42 L1068.13 969.35 L1068.43 969.32 L1068.72 969.34 L1068.99 969.39 L1069.24 969.49 L1069.46 969.63 L1069.64 969.79 L1069.79 969.97 L1069.9 970.16" fill="none" stroke="#b8b8b8" stroke-width="1.35" stroke-linecap="butt" stroke-linejoin="round"/>
<path d="M1369 965.5 H1372.3 V980.4 H1369 M1379 965.5 H1375.7 V980.4 H1379" stroke="#ddd4ce" stroke-width="1.1" fill="none"/>
<circle cx="188.9" cy="998.35" r="7.15" fill="none" stroke="#b8b8b8" stroke-width="1.5"/>
<path d="M188.9 990.95 V987.75 M185.9 987.85 H191.9" stroke="#b8b8b8" stroke-width="1.4" fill="none"/>
<path d="M181.2 989.75 L183.3 991.75" stroke="#b8b8b8" stroke-width="1.6" fill="none"/>
<path d="M1076.86 990.63 L1077.45 991.73 L1077.89 992.88 L1078.16 994.07 L1078.27 995.27 L1078.21 996.46 L1078 997.62 L1077.65 998.72 L1077.15 999.76 L1076.52 1000.71 L1075.78 1001.55 L1074.94 1002.28 L1074.03 1002.89 L1073.05 1003.37 L1072.02 1003.71 L1070.97 1003.9 L1069.91 1003.95 L1068.87 1003.91 L1067.83 1003.77 L1066.82 1003.49 L1065.86 1003.07 L1064.95 1002.53 L1064.13 1001.87 L1063.42 1001.09 L1062.82 1000.22 L1062.34 999.28 L1062 998.29 L1061.79 997.25 L1061.74 996.2 L1061.93 995.17 L1062.25 994.2 L1062.7 993.29 L1063.27 992.46 L1063.93 991.73 L1064.67 991.11 L1065.48 990.61 L1066.33 990.23 L1067.22 989.97 L1068.11 989.85 L1069 989.85 L1069.87 990.02 L1070.66 990.35 L1071.38 990.78 L1072.01 991.29 L1072.54 991.87 L1072.96 992.49 L1073.29 993.14 L1073.51 993.81 L1073.62 994.47 L1073.64 995.12 L1073.56 995.75 L1073.41 996.33 L1073.29 996.87 L1073.11 997.39 L1072.86 997.87 L1072.56 998.31 L1072.2 998.69 L1071.8 999.02 L1071.39 999.31 L1070.94 999.54 L1070.46 999.71 L1069.98 999.81 L1069.49 999.84 L1069 999.81 L1068.53 999.71 L1068.07 999.55 L1067.65 999.33 L1067.27 999.06 L1066.93 998.75 L1066.65 998.38 L1066.45 997.98 L1066.3 997.56 L1066.21 997.13 L1066.18 996.71 L1066.21 996.3 L1066.33 995.91 L1066.5 995.55 L1066.71 995.23 L1066.95 994.96 L1067.23 994.73 L1067.52 994.55 L1067.82 994.42 L1068.13 994.35 L1068.43 994.32 L1068.72 994.34 L1068.99 994.39 L1069.24 994.49 L1069.46 994.63 L1069.64 994.79 L1069.79 994.97 L1069.9 995.16" fill="none" stroke="#b8b8b8" stroke-width="1.35" stroke-linecap="butt" stroke-linejoin="round"/>
<path d="M1369 990.5 H1372.3 V1005.4 H1369 M1379 990.5 H1375.7 V1005.4 H1379" stroke="#ddd4ce" stroke-width="1.1" fill="none"/>
<path d="M1369 865.5 H1372.3 V880.4 H1369 M1379 865.5 H1375.7 V880.4 H1379" stroke="#ddd4ce" stroke-width="1.1" fill="none"/>
<path d="M207.9 912.7 V928.3 H223" fill="none" stroke="#c8c8c8" stroke-width="1.5"/>
<path d="M208 922.6 L211.4 918.2 L215.8 925.2 L220.7 917.6" fill="none" stroke="#c8c8c8" stroke-width="1.3"/>
<path d="M13.4 921.4 L22.1 915.4 V927.6Z" fill="#c2c2c2"/>
<rect x="31.6" y="912.7" width="19" height="19" fill="none" stroke="#303030" stroke-width="1"/>
<path d="M40.3 914.9 L46.9 921.4 L40.3 928 L33.8 921.4Z" fill="#4a96ee"/>
<path d="M67.3 921.4 L58.8 915.4 V927.6Z" fill="#4a4a4a"/>
<path d="M1242 916.55 L1235.7 922.85 L1242 929.15Z" fill="#a2a2a2"/>
<path d="M1242 916.55 L1248.3 922.85 L1242 929.15Z" fill="#cfcfcf"/>
<path d="M1374 916.55 L1367.7 922.85 L1374 929.15Z" fill="#4a96ee"/>
<path d="M1374 916.55 L1380.3 922.85 L1374 929.15Z" fill="#3a7ed4"/>
<path d="M846.5 944.2 H844.6 A3 3 0 0 0 844.6 950.2 H849.4 A3 3 0 0 0 851.6 945.4 M851 950.3 H853 A3 3 0 0 0 853 944.3 H848.4 A3 3 0 0 0 846.2 949" fill="none" stroke="#c4c4c4" stroke-width="1.6"/>
<path d="M10.7 1021.2 Q14.7 1015.8 18.7 1015.8 Q22.7 1015.8 26.7 1021.2 Q22.7 1026.6 18.7 1026.6 Q14.7 1026.6 10.7 1021.2Z" fill="#b8b8b8"/>
<circle cx="18.5" cy="1021" r="3.1" fill="#262626"/>
<path d="M19 1019.5 L20.7 1020.4 L19 1021.1Z" fill="#b8b8b8" opacity=".8"/>
<path d="M77.6 1019.5 H91.2 V1028 H77.6Z" fill="#b8b8b8"/>
<path d="M80.4 1019.7 V1016.9 A4 4 0 0 1 88.4 1016.9 V1019.7" fill="none" stroke="#b8b8b8" stroke-width="2.1"/>
<circle cx="84.4" cy="1022.5" r="1.4" fill="#262626"/>
<path d="M83.6 1022.7 L85.2 1022.7 L85.5 1026.1 L83.3 1026.1Z" fill="#262626"/>
<path d="M111.1 1017.4 L116.7 1022.9 L111.1 1028.4" fill="none" stroke="#c4c4c4" stroke-width="1.4"/>
<path d="M842.9 1023 A6.8 7.6 0 0 1 856.5 1023 L851.2 1023 L851.2 1027.4 A1.5 1.5 0 0 1 848.2 1027.4 L848.2 1023Z" fill="#b8b8b8"/>
<rect x="840.7" y="1025" width="6.2" height="1.9" fill="#b8b8b8"/>
<rect x="852.5" y="1025" width="6.2" height="1.9" fill="#b8b8b8"/>
<circle cx="847" cy="1019.5" r="1.45" fill="#282828"/><circle cx="852.4" cy="1019.5" r="1.45" fill="#282828"/>
<path d="M874.9 1021.3 L878.9 1021.3 M873.9 1023.7 L875.46 1025.26 M871.5 1024.7 L871.5 1028.7 M869.1 1023.7 L867.54 1025.26 M868.1 1021.3 L864.1 1021.3 M869.1 1018.9 L867.54 1017.34 M871.5 1017.9 L871.5 1013.9 M873.9 1018.9 L875.46 1017.34 " stroke="#6e6e6e" stroke-width="1.3" fill="none"/>
<circle cx="871.5" cy="1021.3" r="2.6" fill="none" stroke="#6e6e6e" stroke-width="1.3"/>
<path d="M886.5 1030.3 L900.8 1015.8" stroke="#c8c8c8" stroke-width="1.9" fill="none" stroke-linecap="round"/>
<path d="M1057.86 1016.13 L1058.45 1017.23 L1058.89 1018.38 L1059.16 1019.57 L1059.27 1020.77 L1059.21 1021.96 L1059 1023.12 L1058.65 1024.22 L1058.15 1025.26 L1057.52 1026.21 L1056.78 1027.05 L1055.94 1027.78 L1055.03 1028.39 L1054.05 1028.87 L1053.02 1029.21 L1051.97 1029.4 L1050.91 1029.45 L1049.87 1029.41 L1048.83 1029.27 L1047.82 1028.99 L1046.86 1028.57 L1045.95 1028.03 L1045.13 1027.37 L1044.42 1026.59 L1043.82 1025.72 L1043.34 1024.78 L1043 1023.79 L1042.79 1022.75 L1042.74 1021.7 L1042.93 1020.67 L1043.25 1019.7 L1043.7 1018.79 L1044.27 1017.96 L1044.93 1017.23 L1045.67 1016.61 L1046.48 1016.11 L1047.33 1015.73 L1048.22 1015.47 L1049.11 1015.35 L1050 1015.35 L1050.87 1015.52 L1051.66 1015.85 L1052.38 1016.28 L1053.01 1016.79 L1053.54 1017.37 L1053.96 1017.99 L1054.29 1018.64 L1054.51 1019.31 L1054.62 1019.97 L1054.64 1020.62 L1054.56 1021.25 L1054.41 1021.83 L1054.29 1022.37 L1054.11 1022.89 L1053.86 1023.37 L1053.56 1023.81 L1053.2 1024.19 L1052.8 1024.52 L1052.39 1024.81 L1051.94 1025.04 L1051.46 1025.21 L1050.98 1025.31 L1050.49 1025.34 L1050 1025.31 L1049.53 1025.21 L1049.07 1025.05 L1048.65 1024.83 L1048.27 1024.56 L1047.93 1024.25 L1047.65 1023.88 L1047.45 1023.48 L1047.3 1023.06 L1047.21 1022.63 L1047.18 1022.21 L1047.21 1021.8 L1047.33 1021.41 L1047.5 1021.05 L1047.71 1020.73 L1047.95 1020.46 L1048.23 1020.23 L1048.52 1020.05 L1048.82 1019.92 L1049.13 1019.85 L1049.43 1019.82 L1049.72 1019.84 L1049.99 1019.89 L1050.24 1019.99 L1050.46 1020.13 L1050.64 1020.29 L1050.79 1020.47 L1050.9 1020.66" fill="none" stroke="#b8b8b8" stroke-width="1.35" stroke-linecap="butt" stroke-linejoin="round"/>
<path d="M1182 1019.4 L1187.5 1025 L1193 1019.4" fill="none" stroke="#d0d0d0" stroke-width="1.7" stroke-linecap="butt" stroke-linejoin="miter"/>
<path d="M10.7 1046.2 Q14.7 1040.8 18.7 1040.8 Q22.7 1040.8 26.7 1046.2 Q22.7 1051.6 18.7 1051.6 Q14.7 1051.6 10.7 1046.2Z" fill="#b8b8b8"/>
<circle cx="18.5" cy="1046" r="3.1" fill="#262626"/>
<path d="M19 1044.5 L20.7 1045.4 L19 1046.1Z" fill="#b8b8b8" opacity=".8"/>
<path d="M77.6 1044.5 H91.2 V1053 H77.6Z" fill="#b8b8b8"/>
<path d="M80.4 1044.7 V1041.9 A4 4 0 0 1 88.4 1041.9 V1044.7" fill="none" stroke="#b8b8b8" stroke-width="2.1"/>
<circle cx="84.4" cy="1047.5" r="1.4" fill="#262626"/>
<path d="M83.6 1047.7 L85.2 1047.7 L85.5 1051.1 L83.3 1051.1Z" fill="#262626"/>
<path d="M111.1 1042.4 L116.7 1047.9 L111.1 1053.4" fill="none" stroke="#c4c4c4" stroke-width="1.4"/>
<path d="M842.9 1048 A6.8 7.6 0 0 1 856.5 1048 L851.2 1048 L851.2 1052.4 A1.5 1.5 0 0 1 848.2 1052.4 L848.2 1048Z" fill="#b8b8b8"/>
<rect x="840.7" y="1050" width="6.2" height="1.9" fill="#b8b8b8"/>
<rect x="852.5" y="1050" width="6.2" height="1.9" fill="#b8b8b8"/>
<circle cx="847" cy="1044.5" r="1.45" fill="#282828"/><circle cx="852.4" cy="1044.5" r="1.45" fill="#282828"/>
<path d="M874.9 1046.3 L878.9 1046.3 M873.9 1048.7 L875.46 1050.26 M871.5 1049.7 L871.5 1053.7 M869.1 1048.7 L867.54 1050.26 M868.1 1046.3 L864.1 1046.3 M869.1 1043.9 L867.54 1042.34 M871.5 1042.9 L871.5 1038.9 M873.9 1043.9 L875.46 1042.34 " stroke="#6e6e6e" stroke-width="1.3" fill="none"/>
<circle cx="871.5" cy="1046.3" r="2.6" fill="none" stroke="#6e6e6e" stroke-width="1.3"/>
<path d="M886.5 1055.3 L900.8 1040.8" stroke="#c8c8c8" stroke-width="1.9" fill="none" stroke-linecap="round"/>
<path d="M1057.86 1041.13 L1058.45 1042.23 L1058.89 1043.38 L1059.16 1044.57 L1059.27 1045.77 L1059.21 1046.96 L1059 1048.12 L1058.65 1049.22 L1058.15 1050.26 L1057.52 1051.21 L1056.78 1052.05 L1055.94 1052.78 L1055.03 1053.39 L1054.05 1053.87 L1053.02 1054.21 L1051.97 1054.4 L1050.91 1054.45 L1049.87 1054.41 L1048.83 1054.27 L1047.82 1053.99 L1046.86 1053.57 L1045.95 1053.03 L1045.13 1052.37 L1044.42 1051.59 L1043.82 1050.72 L1043.34 1049.78 L1043 1048.79 L1042.79 1047.75 L1042.74 1046.7 L1042.93 1045.67 L1043.25 1044.7 L1043.7 1043.79 L1044.27 1042.96 L1044.93 1042.23 L1045.67 1041.61 L1046.48 1041.11 L1047.33 1040.73 L1048.22 1040.47 L1049.11 1040.35 L1050 1040.35 L1050.87 1040.52 L1051.66 1040.85 L1052.38 1041.28 L1053.01 1041.79 L1053.54 1042.37 L1053.96 1042.99 L1054.29 1043.64 L1054.51 1044.31 L1054.62 1044.97 L1054.64 1045.62 L1054.56 1046.25 L1054.41 1046.83 L1054.29 1047.37 L1054.11 1047.89 L1053.86 1048.37 L1053.56 1048.81 L1053.2 1049.19 L1052.8 1049.52 L1052.39 1049.81 L1051.94 1050.04 L1051.46 1050.21 L1050.98 1050.31 L1050.49 1050.34 L1050 1050.31 L1049.53 1050.21 L1049.07 1050.05 L1048.65 1049.83 L1048.27 1049.56 L1047.93 1049.25 L1047.65 1048.88 L1047.45 1048.48 L1047.3 1048.06 L1047.21 1047.63 L1047.18 1047.21 L1047.21 1046.8 L1047.33 1046.41 L1047.5 1046.05 L1047.71 1045.73 L1047.95 1045.46 L1048.23 1045.23 L1048.52 1045.05 L1048.82 1044.92 L1049.13 1044.85 L1049.43 1044.82 L1049.72 1044.84 L1049.99 1044.89 L1050.24 1044.99 L1050.46 1045.13 L1050.64 1045.29 L1050.79 1045.47 L1050.9 1045.66" fill="none" stroke="#b8b8b8" stroke-width="1.35" stroke-linecap="butt" stroke-linejoin="round"/>
<path d="M1182 1044.4 L1187.5 1050 L1193 1044.4" fill="none" stroke="#d0d0d0" stroke-width="1.7" stroke-linecap="butt" stroke-linejoin="miter"/>
<path d="M10.7 1071.2 Q14.7 1065.8 18.7 1065.8 Q22.7 1065.8 26.7 1071.2 Q22.7 1076.6 18.7 1076.6 Q14.7 1076.6 10.7 1071.2Z" fill="#b8b8b8"/>
<circle cx="18.5" cy="1071" r="3.1" fill="#262626"/>
<path d="M19 1069.5 L20.7 1070.4 L19 1071.1Z" fill="#b8b8b8" opacity=".8"/>
<path d="M77.6 1069.5 H91.2 V1078 H77.6Z" fill="#b8b8b8"/>
<path d="M80.4 1069.7 V1066.9 A4 4 0 0 1 88.4 1066.9 V1069.7" fill="none" stroke="#b8b8b8" stroke-width="2.1"/>
<circle cx="84.4" cy="1072.5" r="1.4" fill="#262626"/>
<path d="M83.6 1072.7 L85.2 1072.7 L85.5 1076.1 L83.3 1076.1Z" fill="#262626"/>
<path d="M111.1 1067.4 L116.7 1072.9 L111.1 1078.4" fill="none" stroke="#c4c4c4" stroke-width="1.4"/>
<path d="M842.9 1073 A6.8 7.6 0 0 1 856.5 1073 L851.2 1073 L851.2 1077.4 A1.5 1.5 0 0 1 848.2 1077.4 L848.2 1073Z" fill="#b8b8b8"/>
<rect x="840.7" y="1075" width="6.2" height="1.9" fill="#b8b8b8"/>
<rect x="852.5" y="1075" width="6.2" height="1.9" fill="#b8b8b8"/>
<circle cx="847" cy="1069.5" r="1.45" fill="#282828"/><circle cx="852.4" cy="1069.5" r="1.45" fill="#282828"/>
<path d="M874.9 1071.3 L878.9 1071.3 M873.9 1073.7 L875.46 1075.26 M871.5 1074.7 L871.5 1078.7 M869.1 1073.7 L867.54 1075.26 M868.1 1071.3 L864.1 1071.3 M869.1 1068.9 L867.54 1067.34 M871.5 1067.9 L871.5 1063.9 M873.9 1068.9 L875.46 1067.34 " stroke="#6e6e6e" stroke-width="1.3" fill="none"/>
<circle cx="871.5" cy="1071.3" r="2.6" fill="none" stroke="#6e6e6e" stroke-width="1.3"/>
<path d="M886.5 1080.3 L900.8 1065.8" stroke="#c8c8c8" stroke-width="1.9" fill="none" stroke-linecap="round"/>
<path d="M1057.86 1066.13 L1058.45 1067.23 L1058.89 1068.38 L1059.16 1069.57 L1059.27 1070.77 L1059.21 1071.96 L1059 1073.12 L1058.65 1074.22 L1058.15 1075.26 L1057.52 1076.21 L1056.78 1077.05 L1055.94 1077.78 L1055.03 1078.39 L1054.05 1078.87 L1053.02 1079.21 L1051.97 1079.4 L1050.91 1079.45 L1049.87 1079.41 L1048.83 1079.27 L1047.82 1078.99 L1046.86 1078.57 L1045.95 1078.03 L1045.13 1077.37 L1044.42 1076.59 L1043.82 1075.72 L1043.34 1074.78 L1043 1073.79 L1042.79 1072.75 L1042.74 1071.7 L1042.93 1070.67 L1043.25 1069.7 L1043.7 1068.79 L1044.27 1067.96 L1044.93 1067.23 L1045.67 1066.61 L1046.48 1066.11 L1047.33 1065.73 L1048.22 1065.47 L1049.11 1065.35 L1050 1065.35 L1050.87 1065.52 L1051.66 1065.85 L1052.38 1066.28 L1053.01 1066.79 L1053.54 1067.37 L1053.96 1067.99 L1054.29 1068.64 L1054.51 1069.31 L1054.62 1069.97 L1054.64 1070.62 L1054.56 1071.25 L1054.41 1071.83 L1054.29 1072.37 L1054.11 1072.89 L1053.86 1073.37 L1053.56 1073.81 L1053.2 1074.19 L1052.8 1074.52 L1052.39 1074.81 L1051.94 1075.04 L1051.46 1075.21 L1050.98 1075.31 L1050.49 1075.34 L1050 1075.31 L1049.53 1075.21 L1049.07 1075.05 L1048.65 1074.83 L1048.27 1074.56 L1047.93 1074.25 L1047.65 1073.88 L1047.45 1073.48 L1047.3 1073.06 L1047.21 1072.63 L1047.18 1072.21 L1047.21 1071.8 L1047.33 1071.41 L1047.5 1071.05 L1047.71 1070.73 L1047.95 1070.46 L1048.23 1070.23 L1048.52 1070.05 L1048.82 1069.92 L1049.13 1069.85 L1049.43 1069.82 L1049.72 1069.84 L1049.99 1069.89 L1050.24 1069.99 L1050.46 1070.13 L1050.64 1070.29 L1050.79 1070.47 L1050.9 1070.66" fill="none" stroke="#b8b8b8" stroke-width="1.35" stroke-linecap="butt" stroke-linejoin="round"/>
<path d="M1182 1069.4 L1187.5 1075 L1193 1069.4" fill="none" stroke="#d0d0d0" stroke-width="1.7" stroke-linecap="butt" stroke-linejoin="miter"/>
<path d="M1365.7 784 H1382.3 V792.5 L1374.9 803.3 H1373.1 L1365.7 792.5Z" fill="#4a8fe4"/>
<path d="M1371 792.8 H1377" stroke="#1e3a5c" stroke-width="1.2"/><path d="M1374 793 V803" stroke="#1e3a5c" stroke-width="1" opacity=".8"/>
<path d="M1240 763.6 V775.4 H1236.5 A5.6 5.9 0 0 1 1236.5 763.6Z" fill="#4a8fe4"/>
<path d="M1240 807 V827.6 H1237 A4.6 5 0 0 1 1232.4 822.6 V812 A4.6 5 0 0 1 1237 807Z" fill="#4a8fe4"/>
<path d="M842.9 819.9 A6.8 7.6 0 0 1 856.5 819.9 L851.2 819.9 L851.2 824.3 A1.5 1.5 0 0 1 848.2 824.3 L848.2 819.9Z" fill="#b8b8b8"/>
<rect x="840.7" y="821.9" width="6.2" height="1.9" fill="#b8b8b8"/>
<rect x="852.5" y="821.9" width="6.2" height="1.9" fill="#b8b8b8"/>
<circle cx="847" cy="816.4" r="1.45" fill="#333333"/><circle cx="852.4" cy="816.4" r="1.45" fill="#333333"/>
<path d="M874.9 821.5 L878.9 821.5 M873.9 823.9 L875.46 825.46 M871.5 824.9 L871.5 828.9 M869.1 823.9 L867.54 825.46 M868.1 821.5 L864.1 821.5 M869.1 819.1 L867.54 817.54 M871.5 818.1 L871.5 814.1 M873.9 819.1 L875.46 817.54 " stroke="#bdbdbd" stroke-width="1.3" fill="none"/>
<circle cx="871.5" cy="821.5" r="2.6" fill="none" stroke="#bdbdbd" stroke-width="1.3"/>
<rect x="885.8" y="813.8" width="2.4" height="2.4" fill="#c4c4c4"/>
<rect x="888.8" y="816.75" width="2.4" height="2.4" fill="#c4c4c4"/>
<rect x="891.8" y="819.7" width="2.4" height="2.4" fill="#c4c4c4"/>
<rect x="894.8" y="822.65" width="2.4" height="2.4" fill="#c4c4c4"/>
<rect x="897.8" y="825.6" width="2.4" height="2.4" fill="#c4c4c4"/>
<text x="906.6" y="826.6" font-family="'Liberation Sans',sans-serif" font-style="italic" font-size="17.5" fill="#b8b8b8" textLength="16.2" lengthAdjust="spacingAndGlyphs">fx</text>
<path d="M928.9 815.1 V828.8 H944" fill="none" stroke="#b8b8b8" stroke-width="1.6"/>
<rect x="931.2" y="813" width="14.7" height="13.6" fill="#b8b8b8"/>
<rect x="932.7" y="814.8" width="1.5" height="1.4" fill="#333333"/><rect x="942.9" y="814.8" width="1.5" height="1.4" fill="#333333"/>
<rect x="932.7" y="817.7" width="1.5" height="1.4" fill="#333333"/><rect x="942.9" y="817.7" width="1.5" height="1.4" fill="#333333"/>
<rect x="932.7" y="820.6" width="1.5" height="1.4" fill="#333333"/><rect x="942.9" y="820.6" width="1.5" height="1.4" fill="#333333"/>
<rect x="932.7" y="823.6" width="1.5" height="1.4" fill="#333333"/><rect x="942.9" y="823.6" width="1.5" height="1.4" fill="#333333"/>
<rect x="935.8" y="819.4" width="5.5" height="1.2" fill="#444"/>
<circle cx="957.3" cy="823.8" r="6.3" fill="#333333" stroke="#b8b8b8" stroke-width="1.4"/>
<circle cx="959.8" cy="821.35" r="6.3" fill="#333333" stroke="#b8b8b8" stroke-width="1.4"/>
<circle cx="962.3" cy="818.9" r="6.3" fill="#6c6c6c" stroke="#b8b8b8" stroke-width="1.4"/>
<circle cx="981.6" cy="821.7" r="6.9" fill="none" stroke="#b8b8b8" stroke-width="1.4"/>
<path d="M986.5 816.8 A6.9 6.9 0 0 1 976.7 826.6Z" fill="#b8b8b8"/>
<path d="M1003.9 813.5 L1011.5 817.55 L1011.5 826.06 L1003.9 829.86 L996.3 826.06 L996.3 817.55Z M996.3 817.55 L1003.9 821.7 L1011.5 817.55 M1003.9 821.7 L1003.9 829.86" fill="none" stroke="#b8b8b8" stroke-width="1.5" stroke-linejoin="round"/>
<path d="M956 774.6 H973 M968.5 774.6 V782 H973" fill="none" stroke="#b8b8b8" stroke-width="1.3"/>
<rect x="959.1" y="772.5" width="6" height="4.1" rx="0.8" fill="#b8b8b8"/><rect x="972.4" y="772.5" width="5.8" height="4.1" rx="0.8" fill="#b8b8b8"/><rect x="972.4" y="779.9" width="5.8" height="4.1" rx="0.8" fill="#b8b8b8"/>
<path d="M974.8 786.4 H981 L977.9 790.2Z" fill="#b8b8b8"/>
<path d="M1011.2 774 L1018.4 774 M1011.2 774 L1014.88 777.68 M1011.2 774 L1011.2 781.2 M1011.2 774 L1007.52 777.68 M1011.2 774 L1004 774 M1011.2 774 L1007.52 770.32 M1011.2 774 L1011.2 766.8 M1011.2 774 L1014.88 770.32 " stroke="#b8b8b8" stroke-width="1.5" fill="none"/><circle cx="1011.2" cy="774" r="3.2" fill="#b8b8b8"/>
<circle cx="1021.5" cy="783.4" r="9.6" fill="#262626"/>
<path d="M1021.5 775.6 L1029.2 779.5 L1029.2 787.69 L1021.5 791.36 L1013.8 787.69 L1013.8 779.5Z M1013.8 779.5 L1021.5 783.5 L1029.2 779.5 M1021.5 783.5 L1021.5 791.36" fill="none" stroke="#b8b8b8" stroke-width="1.7" stroke-linejoin="round"/>
<rect x="1056.1" y="781.2" width="23.4" height="7.6" fill="#6a6a6a"/>
<path d="M1061.3 779.6 A6.75 8.9 0 0 1 1074.8 779.6 L1075 777.5 Q1075.3 775.6 1076.6 777.3 Q1077.6 775.3 1078.5 776.6 V779.6 H1069.6 V784.7 A1.75 1.75 0 0 1 1066.1 784.7 V779.6 H1057.3 V776.6 Q1058.2 775.3 1059.2 777.3 Q1060.5 775.6 1060.9 777.5Z" fill="#b8b8b8"/>
<circle cx="1065.1" cy="775.7" r="1.5" fill="#262626"/><circle cx="1070.4" cy="775.7" r="1.5" fill="#262626"/>
<rect x="1095.7" y="774" width="14.3" height="15.9" fill="#b8b8b8" stroke="#262626" stroke-width="0.8"/>
<rect x="1097.4" y="776.2" width="1.5" height="1.4" fill="#262626"/><rect x="1106.8" y="776.2" width="1.5" height="1.4" fill="#262626"/>
<rect x="1097.4" y="778.73" width="1.5" height="1.4" fill="#262626"/><rect x="1106.8" y="778.73" width="1.5" height="1.4" fill="#262626"/>
<rect x="1097.4" y="781.25" width="1.5" height="1.4" fill="#262626"/><rect x="1106.8" y="781.25" width="1.5" height="1.4" fill="#262626"/>
<rect x="1097.4" y="783.78" width="1.5" height="1.4" fill="#262626"/><rect x="1106.8" y="783.78" width="1.5" height="1.4" fill="#262626"/>
<rect x="1097.4" y="786.3" width="1.5" height="1.4" fill="#262626"/><rect x="1106.8" y="786.3" width="1.5" height="1.4" fill="#262626"/>
<rect x="1101.3" y="769.3" width="15" height="16.1" fill="#b8b8b8" stroke="#262626" stroke-width="0.8"/>
<rect x="1103" y="771.5" width="1.5" height="1.4" fill="#262626"/><rect x="1113.1" y="771.5" width="1.5" height="1.4" fill="#262626"/>
<rect x="1103" y="774.08" width="1.5" height="1.4" fill="#262626"/><rect x="1113.1" y="774.08" width="1.5" height="1.4" fill="#262626"/>
<rect x="1103" y="776.65" width="1.5" height="1.4" fill="#262626"/><rect x="1113.1" y="776.65" width="1.5" height="1.4" fill="#262626"/>
<rect x="1103" y="779.23" width="1.5" height="1.4" fill="#262626"/><rect x="1113.1" y="779.23" width="1.5" height="1.4" fill="#262626"/>
<rect x="1103" y="781.8" width="1.5" height="1.4" fill="#262626"/><rect x="1113.1" y="781.8" width="1.5" height="1.4" fill="#262626"/>
<rect x="1106" y="777" width="5.7" height="1.2" fill="#2e2e2e"/>
<circle cx="1141" cy="783" r="6.5" fill="#262626" stroke="#b8b8b8" stroke-width="1.4"/>
<circle cx="1144" cy="779.65" r="6.5" fill="#262626" stroke="#b8b8b8" stroke-width="1.4"/>
<circle cx="1147" cy="776.3" r="6.5" fill="#6c6c6c" stroke="#b8b8b8" stroke-width="1.4"/>
<rect x="1184.6" y="771.9" width="20.7" height="17.1" fill="none" stroke="#b8b8b8" stroke-width="1.6"/>
<path d="M1187.5 769.6 V771.5 M1191.8 768 V771.5 M1196.2 769.6 V771.5 M1200.8 768 V771.5 M1182 774.6 H1184 M1182 780.7 H1184 M1182 786.4 H1184" stroke="#b8b8b8" stroke-width="1.4" fill="none"/>
<path d="M1187 776 C1194.5 776 1194 785 1202 785" fill="none" stroke="#b8b8b8" stroke-width="1.4"/>
<path d="M203 731.6 L209.8 738.6 M209.8 731.6 L203 738.6" stroke="#a8a8a8" stroke-width="1.2" fill="none"/>
<path d="M324.5 730.5 H336.4 M324.5 735 H336.4 M324.5 739.4 H336.4" stroke="#cfcfcf" stroke-width="1.3" fill="none"/>
<circle cx="30.9" cy="126" r="5.3" fill="none" stroke="#b8b8b8" stroke-width="1.4"/>
<path d="M27.2 130 L21 136.1" stroke="#b8b8b8" stroke-width="1.5" fill="none"/>
<path d="M36.8 130.3 H45.8 L41.3 135.2Z" fill="#b8b8b8"/>
<circle cx="168.75" cy="777.1" r="5.3" fill="none" stroke="#b8b8b8" stroke-width="1.4"/>
<path d="M165.05 781.1 L158.85 787.2" stroke="#b8b8b8" stroke-width="1.5" fill="none"/>
<path d="M174.65 781.4 H183.65 L179.15 786.3Z" fill="#b8b8b8"/>
<rect x="56.9" y="186.1" width="23.9" height="20" fill="#b9b9b9"/>
<rect x="61.1" y="187.3" width="15.5" height="17.6" fill="#c6c6c6"/>
<rect x="58.7" y="187.7" width="1.4" height="2.6" rx="0.6" fill="#2e2e2e"/><rect x="77.6" y="187.7" width="1.4" height="2.6" rx="0.6" fill="#2e2e2e"/>
<rect x="58.7" y="192.45" width="1.4" height="2.6" rx="0.6" fill="#2e2e2e"/><rect x="77.6" y="192.45" width="1.4" height="2.6" rx="0.6" fill="#2e2e2e"/>
<rect x="58.7" y="197.2" width="1.4" height="2.6" rx="0.6" fill="#2e2e2e"/><rect x="77.6" y="197.2" width="1.4" height="2.6" rx="0.6" fill="#2e2e2e"/>
<rect x="58.7" y="201.95" width="1.4" height="2.6" rx="0.6" fill="#2e2e2e"/><rect x="77.6" y="201.95" width="1.4" height="2.6" rx="0.6" fill="#2e2e2e"/>
<rect x="69.49" y="192.6" width="5.6" height="5.8" fill="#f0483a" stroke="#2a2a2a" stroke-width="0.7"/>
<circle cx="65.89" cy="193.3" r="2.9" fill="#4a9af5" stroke="#2a2a2a" stroke-width="0.7"/>
<path d="M68.49 194.5 L72.69 199.9 H64.09Z" fill="#3fa336" stroke="#2a2a2a" stroke-width="0.6"/>
<rect x="62.3" y="202.7" width="13.1" height="1" fill="#333"/>
<rect x="81" y="686" width="25.2" height="18" fill="#b9b9b9"/>
<rect x="85.2" y="687.2" width="16.8" height="15.6" fill="#c6c6c6"/>
<rect x="82.8" y="687.6" width="1.4" height="2.6" rx="0.6" fill="#2a2a2a"/><rect x="103" y="687.6" width="1.4" height="2.6" rx="0.6" fill="#2a2a2a"/>
<rect x="82.8" y="691.85" width="1.4" height="2.6" rx="0.6" fill="#2a2a2a"/><rect x="103" y="691.85" width="1.4" height="2.6" rx="0.6" fill="#2a2a2a"/>
<rect x="82.8" y="696.1" width="1.4" height="2.6" rx="0.6" fill="#2a2a2a"/><rect x="103" y="696.1" width="1.4" height="2.6" rx="0.6" fill="#2a2a2a"/>
<rect x="82.8" y="700.35" width="1.4" height="2.6" rx="0.6" fill="#2a2a2a"/><rect x="103" y="700.35" width="1.4" height="2.6" rx="0.6" fill="#2a2a2a"/>
<rect x="94.08" y="691.78" width="5.6" height="5.8" fill="#f0483a" stroke="#2a2a2a" stroke-width="0.7"/>
<circle cx="90.48" cy="692.48" r="2.9" fill="#4a9af5" stroke="#2a2a2a" stroke-width="0.7"/>
<path d="M93.08 693.68 L97.28 699.08 H88.68Z" fill="#3fa336" stroke="#2a2a2a" stroke-width="0.6"/>
<rect x="86.4" y="700.6" width="14.4" height="1" fill="#333"/>
<rect x="58.7" y="214.1" width="7.2" height="1.5" fill="#b6b6b6"/><rect x="58.7" y="217.1" width="20.5" height="13.3" fill="#b6b6b6"/>
<rect x="47" y="685.8" width="7.2" height="1.5" fill="#b6b6b6"/><rect x="47" y="688.8" width="19" height="11.8" fill="#b6b6b6"/>
<path d="M39.4 218 L45 223.6 L39.4 229.2" fill="none" stroke="#c0c0c0" stroke-width="1.4"/>
<rect x="454" y="186.3" width="7.2" height="5.6" fill="#b8b8b8"/><rect x="448" y="198.3" width="7.2" height="5.8" fill="#b8b8b8"/><rect x="460" y="198.3" width="7.2" height="5.8" fill="#b8b8b8"/>
<path d="M457.6 191.3 V195.3 M451.6 198.8 V195.3 H463.6 V198.8" fill="none" stroke="#b8b8b8" stroke-width="1.4"/>
<path d="M7.1 690 H14 V699 H26.7 V704 H7.1Z" fill="#b8b8b8"/>
<rect x="8.8" y="691.5" width="1.4" height="2.4" rx="0.6" fill="#272727"/>
<rect x="8.8" y="696.5" width="1.4" height="2.4" rx="0.6" fill="#272727"/>
<rect x="8.8" y="701.2" width="1.4" height="2.4" rx="0.6" fill="#272727"/>
<rect x="23.4" y="701.2" width="1.4" height="2.8" fill="#272727"/><rect x="9.6" y="701.6" width="0" height="0"/>
<rect x="14.6" y="687.1" width="17.7" height="10.6" fill="#b8b8b8" stroke="#272727" stroke-width="0.8"/>
<rect x="16.2" y="690" width="14.6" height="6" fill="#2c2c2c"/><rect x="17.8" y="691.6" width="2.8" height="2.8" fill="#b8b8b8"/><rect x="22" y="692" width="7.2" height="1.3" fill="#b8b8b8"/>
<g fill="#686868"><path d="M137.8 684.2 C139 690 134 698 126.8 700.2 C124.4 694 130 687 137.8 684.2Z"/><path d="M127 688.2 C123.5 688.8 121 691.5 119.3 694.6 C122 694.4 124 693.6 125.6 692.2Z"/><path d="M131.6 698 C131.8 700.5 130.2 702.2 128 703.4 C127.6 702 127.8 700.6 128.3 699.6Z"/></g>
<path d="M136.3 693.5 A4.6 4.6 0 1 0 141.5 693.5" fill="none" stroke="#c2c2c2" stroke-width="1.5"/><path d="M138.9 690.4 V697.3" stroke="#c2c2c2" stroke-width="1.6"/>
<path d="M226 688 H242.3 M231.6 687.6 Q231.8 684.8 234.8 684.8 Q237.8 684.8 238 687.6 M228.1 688.6 L228.8 701.5 H239.8 L240.5 688.6" fill="none" stroke="#b8b8b8" stroke-width="1.5"/>
<path d="M231.4 690.6 V699.6 M234.3 690.6 V699.6 M237.2 690.6 V699.6" stroke="#b8b8b8" stroke-width="1.4"/>
<path d="M1309 0 V373" stroke="#5a1a1a" stroke-width="1" fill="none"/>
<rect x="1307.9" y="372.2" width="2.2" height="2.2" fill="#d04040"/>
<rect x="1307.9" y="361.13" width="2.2" height="2.2" fill="#d04040"/>
<rect x="1307.9" y="350.06" width="2.2" height="2.2" fill="#d04040"/>
<rect x="1307.9" y="338.99" width="2.2" height="2.2" fill="#d04040"/>
<rect x="1307.9" y="327.92" width="2.2" height="2.2" fill="#d04040"/>
<rect x="1307.9" y="316.85" width="2.2" height="2.2" fill="#d04040"/>
<rect x="1307.9" y="305.78" width="2.2" height="2.2" fill="#d04040"/>
<rect x="1307.9" y="294.71" width="2.2" height="2.2" fill="#d04040"/>
<rect x="1307.9" y="283.64" width="2.2" height="2.2" fill="#d04040"/>
<rect x="1307.9" y="272.57" width="2.2" height="2.2" fill="#d04040"/>
<rect x="1307.9" y="261.5" width="2.2" height="2.2" fill="#d04040"/>
<rect x="1307.9" y="250.43" width="2.2" height="2.2" fill="#d04040"/>
<rect x="1307.9" y="239.36" width="2.2" height="2.2" fill="#d04040"/>
<rect x="1307.9" y="228.29" width="2.2" height="2.2" fill="#d04040"/>
<rect x="1307.9" y="217.22" width="2.2" height="2.2" fill="#d04040"/>
<rect x="1307.9" y="206.15" width="2.2" height="2.2" fill="#d04040"/>
<rect x="1307.9" y="195.08" width="2.2" height="2.2" fill="#d04040"/>
<rect x="1307.9" y="184.01" width="2.2" height="2.2" fill="#d04040"/>
<rect x="1307.9" y="172.94" width="2.2" height="2.2" fill="#d04040"/>
<rect x="1307.9" y="161.87" width="2.2" height="2.2" fill="#d04040"/>
<rect x="1307.9" y="150.8" width="2.2" height="2.2" fill="#d04040"/>
<rect x="1307.9" y="139.73" width="2.2" height="2.2" fill="#d04040"/>
<rect x="1307.9" y="128.66" width="2.2" height="2.2" fill="#d04040"/>
<rect x="1307.9" y="117.59" width="2.2" height="2.2" fill="#d04040"/>
<rect x="1307.9" y="106.52" width="2.2" height="2.2" fill="#d04040"/>
<rect x="1307.9" y="95.45" width="2.2" height="2.2" fill="#d04040"/>
<rect x="1307.9" y="84.38" width="2.2" height="2.2" fill="#d04040"/>
<rect x="1307.9" y="73.31" width="2.2" height="2.2" fill="#d04040"/>
<rect x="1307.9" y="62.24" width="2.2" height="2.2" fill="#d04040"/>
<rect x="1307.9" y="51.17" width="2.2" height="2.2" fill="#d04040"/>
<rect x="1307.9" y="40.1" width="2.2" height="2.2" fill="#d04040"/>
<rect x="1307.9" y="29.03" width="2.2" height="2.2" fill="#d04040"/>
<rect x="1307.9" y="17.96" width="2.2" height="2.2" fill="#d04040"/>
<rect x="1307.9" y="6.89" width="2.2" height="2.2" fill="#d04040"/>
<circle cx="1309" cy="251.8" r="4.1" fill="#c93d3d"/>
<rect x="1303.1" y="367.5" width="12.6" height="12.4" fill="none" stroke="#c93d3d" stroke-width="1.1"/>
<path d="M504.8 689 V697.3 H492 M501.8 686 V694.3 H489" fill="none" stroke="#b8b8b8" stroke-width="1.4"/>
<rect x="486" y="683" width="13.3" height="8.4" fill="#b8b8b8"/><path d="M490.8 684.8 L495.2 687.3 L490.8 689.9Z" fill="#262626"/>
<rect x="519.6" y="682" width="15.3" height="9.7" fill="none" stroke="#b8b8b8" stroke-width="1.6"/><path d="M525 694.6 H529.6 L531 696.3 H533 V697.8 H521.5 V696.3 H523.6Z" fill="#b8b8b8"/>
<path d="M551.5 681.2 H567.4 Q570.1 681.2 570.1 684 V689.5 Q570.1 694 566 694 H564.6 Q562.6 694 561.4 692.4 L559.45 690 L557.5 692.4 Q556.3 694 554.3 694 H552.9 Q548.8 694 548.8 689.5 V684 Q548.8 681.2 551.5 681.2Z" fill="#b8b8b8"/>
<circle cx="554.9" cy="686.9" r="2.7" fill="#262626"/><circle cx="564.1" cy="686.9" r="2.7" fill="#262626"/><circle cx="554.9" cy="686.9" r="1" fill="#555"/><circle cx="564.1" cy="686.9" r="1" fill="#555"/>
<path d="M548.2 684 V688.6 M571 684 V688.6" stroke="#b8b8b8" stroke-width="0.9"/>
<path d="M561.5 697.1 H569.6 L565.55 701.8Z" fill="#b8b8b8"/>
<path d="M659 688.4 L664.5 694 L670 688.4" fill="none" stroke="#d0d0d0" stroke-width="1.45" stroke-linecap="butt" stroke-linejoin="miter"/>
<rect x="685.5" y="682.7" width="16.9" height="10.6" fill="none" stroke="#b8b8b8" stroke-width="1.8"/>
<path d="M694 680 V684 M694 692.2 V696 M683 688 H687 M701 688 H705 M692.6 688 H695.4 M694 686.6 V689.4" stroke="#b8b8b8" stroke-width="1.5" fill="none"/>
<path d="M697 697.5 H704.3 L700.65 701.9Z" fill="#b8b8b8"/>
<path d="M725.5 682.8 L735.9 682.8 L735.9 690.2 L735.9 697.6 L717.9 697.6 L717.9 690.1Z" fill="none" stroke="#4a9df5" stroke-width="1.5"/>
<circle cx="725.5" cy="682.8" r="1.35" fill="#4a9df5"/>
<circle cx="735.9" cy="682.8" r="1.35" fill="#4a9df5"/>
<circle cx="735.9" cy="690.2" r="1.35" fill="#4a9df5"/>
<circle cx="735.9" cy="697.6" r="1.35" fill="#4a9df5"/>
<circle cx="717.9" cy="697.6" r="1.35" fill="#4a9df5"/>
<circle cx="717.9" cy="690.1" r="1.35" fill="#4a9df5"/>
<path d="M852 686 H856 L858.2 683 H865.7 L867.9 686 H872.8 V698.9 H852Z" fill="#b8b8b8"/><circle cx="861.9" cy="691.7" r="3.6" fill="#c4c4c4" stroke="#1f1f1f" stroke-width="1.4"/>
<path d="M892 682.4 H895 L896.3 680.3 H900.8 L902 682.4 H905 V688.8 H892Z" fill="#454545"/><circle cx="898.5" cy="684.6" r="2.1" fill="#454545" stroke="#262626" stroke-width="1"/>
<path d="M883 692.7 Q887.5 686.8 892.4 686.8 Q897.3 686.8 901.8 692.7 Q897.3 698.4 892.4 698.4 Q887.5 698.4 883 692.7Z" fill="#454545" stroke="#262626" stroke-width="0.8"/><circle cx="892.4" cy="692.6" r="3.5" fill="#222"/>
<circle cx="921.8" cy="691.1" r="4.35" fill="#4fc43c"/><circle cx="925.9" cy="684.6" r="4.35" fill="#f03a28"/><circle cx="929.9" cy="691.1" r="4.35" fill="#4a74f2"/>
<path d="M928.8 697.4 H936.6 L932.7 701.9Z" fill="#b8b8b8"/>
<path d="M1054 688.4 L1059.5 694 L1065 688.4" fill="none" stroke="#d0d0d0" stroke-width="1.45" stroke-linecap="butt" stroke-linejoin="miter"/>
<rect x="1080.3" y="682.1" width="19" height="16.1" fill="none" stroke="#b8b8b8" stroke-width="1.6"/><rect x="1085.3" y="687.1" width="10.4" height="7.5" fill="#b8b8b8"/>
<rect x="1112.6" y="683.6" width="18.9" height="14.7" fill="#777" stroke="#b8b8b8" stroke-width="1.4"/>
<rect x="1113.4" y="684.4" width="4.33" height="4.37" fill="#1c1c1c"/>
<rect x="1122.06" y="684.4" width="4.33" height="4.37" fill="#1c1c1c"/>
<rect x="1117.73" y="688.77" width="4.33" height="4.37" fill="#1c1c1c"/>
<rect x="1126.39" y="688.77" width="4.33" height="4.37" fill="#1c1c1c"/>
<rect x="1113.4" y="693.14" width="4.33" height="4.37" fill="#1c1c1c"/>
<rect x="1122.06" y="693.14" width="4.33" height="4.37" fill="#1c1c1c"/>
<path d="M1277 688.4 L1282.5 694 L1288 688.4" fill="none" stroke="#d0d0d0" stroke-width="1.45" stroke-linecap="butt" stroke-linejoin="miter"/>
<path d="M1386 688.4 L1391.5 694 L1397 688.4" fill="none" stroke="#d0d0d0" stroke-width="1.45" stroke-linecap="butt" stroke-linejoin="miter"/>
<path d="M1413 685 H1430.5" stroke="#b8b8b8" stroke-width="1.8"/><path d="M1410.2 685 L1414.6 681.4 V688.6Z M1433.1 685 L1428.7 681.4 V688.6Z" fill="#b8b8b8"/><rect x="1416.8" y="691.4" width="10" height="6.6" fill="none" stroke="#b8b8b8" stroke-width="1.5"/>
<path d="M1457 697.9 H1445 V682.2 H1463.2 V693.5" fill="none" stroke="#b8b8b8" stroke-width="1.6"/>
<path d="M1455.7 684.2 L1449.7 691.5 L1453.3 691 L1452.3 696.4 L1458.1 688.7 L1454.7 689.3Z" fill="#b8b8b8"/>
<path d="M1456.6 695.2 H1464.6 L1460.6 699.6Z" fill="#b8b8b8"/>
<path d="M1478.3 684.1 V695.1 H1496.1 V684.1 M1482.6 690 V695 M1491.6 690 V695" fill="none" stroke="#b8b8b8" stroke-width="1.8"/>
<path d="M1483.3 681.2 H1490.9 V685.4 L1488.1 688 V695 H1486.1 V688 L1483.3 685.4Z" fill="#b8b8b8"/>
<rect x="1514.5" y="681.2" width="7.4" height="5.5" fill="#b8b8b8"/><rect x="1508.3" y="693.2" width="7.5" height="5.7" fill="#b8b8b8"/><rect x="1520.3" y="693.2" width="7.5" height="5.7" fill="#b8b8b8"/>
<path d="M1518.2 686.2 V690.8 M1512 693.7 V690.8 H1524.1 V693.7" fill="none" stroke="#b8b8b8" stroke-width="1.5"/>
<circle cx="1553.9" cy="690.3" r="9" fill="#b8b8b8"/>
<path d="M1556.34 691.19 Q1555.61 696.68 1553.09 699.56 M1554.35 692.86 Q1549.23 694.97 1545.47 694.23 M1551.91 691.97 Q1547.52 688.59 1546.28 684.97 M1551.46 689.41 Q1552.19 683.92 1554.71 681.04 M1553.45 687.74 Q1558.57 685.63 1562.33 686.37 M1555.89 688.63 Q1560.28 692.01 1561.52 695.63 " fill="none" stroke="#262626" stroke-width="1.1"/><circle cx="1553.9" cy="690.3" r="2.7" fill="#262626"/>
<rect x="1.1" y="713.6" width="1919" height="1.7" fill="#4a96f5"/><rect x="1.1" y="713.6" width="1.95" height="367" fill="#4a96f5"/>
</svg>
</div>
</body></html>
